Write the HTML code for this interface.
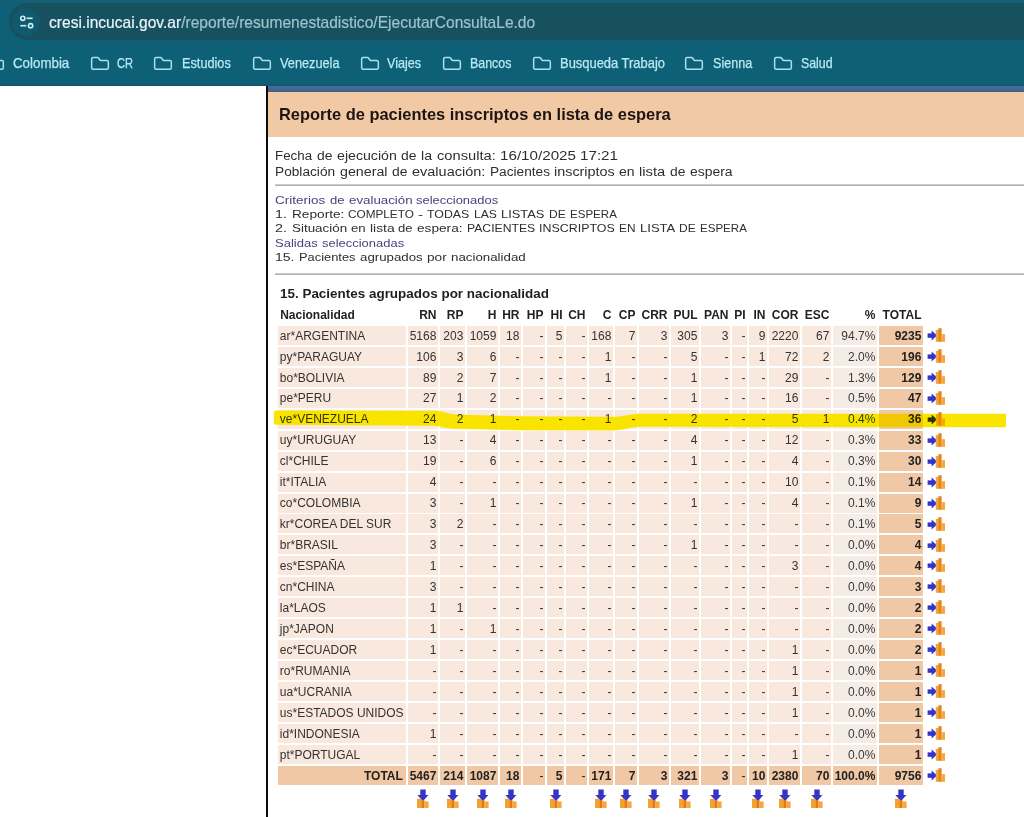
<!DOCTYPE html><html><head><meta charset="utf-8"><style>
html,body{margin:0;padding:0;}
body{width:1024px;height:817px;overflow:hidden;position:relative;background:#fff;font-family:"Liberation Sans", sans-serif;}
.a{position:absolute;white-space:pre;}
.t{position:absolute;white-space:pre;transform-origin:0 0;}
.c{position:absolute;}
.n{position:absolute;white-space:pre;text-align:right;font-size:12px;line-height:19px;height:19px;color:#333;}

</style></head><body>
<div class="c" style="left:0;top:0;width:1024px;height:86px;background:#0e6076"></div>
<div class="c" style="left:0;top:0;width:1024px;height:3px;background:#145f74"></div>
<div class="c" style="left:0;top:84px;width:1024px;height:2px;background:#195470"></div>
<div class="c" style="left:8.5px;top:3px;width:1100px;height:37px;border-radius:18.5px;background:#17515f"></div>
<div class="c" style="left:11.5px;top:7.5px;width:28px;height:28px;border-radius:14px;background:#0f5a6d"></div>
<svg class="c" style="left:11.5px;top:7.5px" width="28" height="28" viewBox="0 0 28 28">
<circle cx="10.8" cy="10.3" r="2.1" fill="none" stroke="#d2eef4" stroke-width="1.6"/>
<line x1="14.6" y1="10.3" x2="20.6" y2="10.3" stroke="#d2eef4" stroke-width="1.6"/>
<line x1="8.3" y1="17.7" x2="14.3" y2="17.7" stroke="#d2eef4" stroke-width="1.6"/>
<circle cx="18.6" cy="17.7" r="2.1" fill="none" stroke="#d2eef4" stroke-width="1.6"/>
</svg>
<svg class="c" style="left:-14.7px;top:56px" width="20" height="15" viewBox="0 0 20 15"><path d="M1.65 3 Q1.65 1.55 3.1 1.55 H7.6 Q8.1 1.55 8.5 2 L9.9 4 Q10.2 4.45 10.7 4.45 H16.9 Q18.35 4.45 18.35 5.9 V11.8 Q18.35 13.25 16.9 13.25 H3.1 Q1.65 13.25 1.65 11.8 Z" fill="none" stroke="#aadfeb" stroke-width="1.5" stroke-linejoin="round"/></svg>
<svg class="c" style="left:89.5px;top:56px" width="20" height="15" viewBox="0 0 20 15"><path d="M1.65 3 Q1.65 1.55 3.1 1.55 H7.6 Q8.1 1.55 8.5 2 L9.9 4 Q10.2 4.45 10.7 4.45 H16.9 Q18.35 4.45 18.35 5.9 V11.8 Q18.35 13.25 16.9 13.25 H3.1 Q1.65 13.25 1.65 11.8 Z" fill="none" stroke="#aadfeb" stroke-width="1.5" stroke-linejoin="round"/></svg>
<svg class="c" style="left:153.3px;top:56px" width="20" height="15" viewBox="0 0 20 15"><path d="M1.65 3 Q1.65 1.55 3.1 1.55 H7.6 Q8.1 1.55 8.5 2 L9.9 4 Q10.2 4.45 10.7 4.45 H16.9 Q18.35 4.45 18.35 5.9 V11.8 Q18.35 13.25 16.9 13.25 H3.1 Q1.65 13.25 1.65 11.8 Z" fill="none" stroke="#aadfeb" stroke-width="1.5" stroke-linejoin="round"/></svg>
<svg class="c" style="left:251.5px;top:56px" width="20" height="15" viewBox="0 0 20 15"><path d="M1.65 3 Q1.65 1.55 3.1 1.55 H7.6 Q8.1 1.55 8.5 2 L9.9 4 Q10.2 4.45 10.7 4.45 H16.9 Q18.35 4.45 18.35 5.9 V11.8 Q18.35 13.25 16.9 13.25 H3.1 Q1.65 13.25 1.65 11.8 Z" fill="none" stroke="#aadfeb" stroke-width="1.5" stroke-linejoin="round"/></svg>
<svg class="c" style="left:359.7px;top:56px" width="20" height="15" viewBox="0 0 20 15"><path d="M1.65 3 Q1.65 1.55 3.1 1.55 H7.6 Q8.1 1.55 8.5 2 L9.9 4 Q10.2 4.45 10.7 4.45 H16.9 Q18.35 4.45 18.35 5.9 V11.8 Q18.35 13.25 16.9 13.25 H3.1 Q1.65 13.25 1.65 11.8 Z" fill="none" stroke="#aadfeb" stroke-width="1.5" stroke-linejoin="round"/></svg>
<svg class="c" style="left:441.8px;top:56px" width="20" height="15" viewBox="0 0 20 15"><path d="M1.65 3 Q1.65 1.55 3.1 1.55 H7.6 Q8.1 1.55 8.5 2 L9.9 4 Q10.2 4.45 10.7 4.45 H16.9 Q18.35 4.45 18.35 5.9 V11.8 Q18.35 13.25 16.9 13.25 H3.1 Q1.65 13.25 1.65 11.8 Z" fill="none" stroke="#aadfeb" stroke-width="1.5" stroke-linejoin="round"/></svg>
<svg class="c" style="left:531.6px;top:56px" width="20" height="15" viewBox="0 0 20 15"><path d="M1.65 3 Q1.65 1.55 3.1 1.55 H7.6 Q8.1 1.55 8.5 2 L9.9 4 Q10.2 4.45 10.7 4.45 H16.9 Q18.35 4.45 18.35 5.9 V11.8 Q18.35 13.25 16.9 13.25 H3.1 Q1.65 13.25 1.65 11.8 Z" fill="none" stroke="#aadfeb" stroke-width="1.5" stroke-linejoin="round"/></svg>
<svg class="c" style="left:684.4px;top:56px" width="20" height="15" viewBox="0 0 20 15"><path d="M1.65 3 Q1.65 1.55 3.1 1.55 H7.6 Q8.1 1.55 8.5 2 L9.9 4 Q10.2 4.45 10.7 4.45 H16.9 Q18.35 4.45 18.35 5.9 V11.8 Q18.35 13.25 16.9 13.25 H3.1 Q1.65 13.25 1.65 11.8 Z" fill="none" stroke="#aadfeb" stroke-width="1.5" stroke-linejoin="round"/></svg>
<svg class="c" style="left:773.2px;top:56px" width="20" height="15" viewBox="0 0 20 15"><path d="M1.65 3 Q1.65 1.55 3.1 1.55 H7.6 Q8.1 1.55 8.5 2 L9.9 4 Q10.2 4.45 10.7 4.45 H16.9 Q18.35 4.45 18.35 5.9 V11.8 Q18.35 13.25 16.9 13.25 H3.1 Q1.65 13.25 1.65 11.8 Z" fill="none" stroke="#aadfeb" stroke-width="1.5" stroke-linejoin="round"/></svg>
<div class="c" style="left:266px;top:86px;width:2px;height:731px;background:#0b0b0b"></div>
<div class="c" style="left:268px;top:86px;width:756px;height:6px;background:linear-gradient(#3f6e9c,#3f6796 60%,#4b5d76)"></div>
<div class="c" style="left:268px;top:92px;width:756px;height:44.5px;background:#f1c9a5"></div>
<div class="c" style="left:275px;top:184px;width:749px;height:2px;background:linear-gradient(#cbcbcb 50%,#b2b2b2 50%)"></div>
<div class="c" style="left:275px;top:272.5px;width:749px;height:2px;background:linear-gradient(#cbcbcb 50%,#b2b2b2 50%)"></div>
<div class="t" style="left:49.00px;top:13.93px;font-size:16.5px;line-height:16.5px;font-weight:400;color:#e8f5f8;transform:scaleX(0.9438);-webkit-text-stroke:0.2px #e8f5f8;">cresi.incucai.gov.ar<span style="color:#9cc3cc;-webkit-text-stroke:0.2px #9cc3cc">/reporte/resumenestadistico/EjecutarConsultaLe.do</span></div>
<div class="t" style="left:12.60px;top:56.20px;font-size:14.3px;line-height:14.3px;font-weight:400;color:#b6eaf3;transform:scaleX(0.9320);-webkit-text-stroke:0.25px #b6eaf3;">Colombia</div>
<div class="t" style="left:117.30px;top:56.20px;font-size:14.3px;line-height:14.3px;font-weight:400;color:#b6eaf3;transform:scaleX(0.7746);-webkit-text-stroke:0.25px #b6eaf3;">CR</div>
<div class="t" style="left:181.80px;top:56.20px;font-size:14.3px;line-height:14.3px;font-weight:400;color:#b6eaf3;transform:scaleX(0.8898);-webkit-text-stroke:0.25px #b6eaf3;">Estudios</div>
<div class="t" style="left:279.50px;top:56.20px;font-size:14.3px;line-height:14.3px;font-weight:400;color:#b6eaf3;transform:scaleX(0.8910);-webkit-text-stroke:0.25px #b6eaf3;">Venezuela</div>
<div class="t" style="left:387.40px;top:56.20px;font-size:14.3px;line-height:14.3px;font-weight:400;color:#b6eaf3;transform:scaleX(0.8840);-webkit-text-stroke:0.25px #b6eaf3;">Viajes</div>
<div class="t" style="left:470.00px;top:56.20px;font-size:14.3px;line-height:14.3px;font-weight:400;color:#b6eaf3;transform:scaleX(0.8682);-webkit-text-stroke:0.25px #b6eaf3;">Bancos</div>
<div class="t" style="left:559.90px;top:56.20px;font-size:14.3px;line-height:14.3px;font-weight:400;color:#b6eaf3;transform:scaleX(0.9047);-webkit-text-stroke:0.25px #b6eaf3;">Busqueda Trabajo</div>
<div class="t" style="left:712.80px;top:56.20px;font-size:14.3px;line-height:14.3px;font-weight:400;color:#b6eaf3;transform:scaleX(0.8803);-webkit-text-stroke:0.25px #b6eaf3;">Sienna</div>
<div class="t" style="left:801.10px;top:56.20px;font-size:14.3px;line-height:14.3px;font-weight:400;color:#b6eaf3;transform:scaleX(0.8639);-webkit-text-stroke:0.25px #b6eaf3;">Salud</div>
<div class="t" style="left:279.20px;top:105.90px;font-size:16.3px;line-height:16.3px;font-weight:700;color:#1d1511;transform:scaleX(1.0092);">Reporte de pacientes inscriptos en lista de espera</div>
<div class="t" style="left:275.40px;top:150.02px;font-size:12.5px;line-height:12.5px;font-weight:400;color:#2e2e2e;transform:scaleX(1.0670);">Fecha</div>
<div class="t" style="left:316.94px;top:150.02px;font-size:12.5px;line-height:12.5px;font-weight:400;color:#2e2e2e;transform:scaleX(1.1108);">de</div>
<div class="t" style="left:336.85px;top:150.02px;font-size:12.5px;line-height:12.5px;font-weight:400;color:#2e2e2e;transform:scaleX(1.1334);">ejecución</div>
<div class="t" style="left:401.18px;top:150.02px;font-size:12.5px;line-height:12.5px;font-weight:400;color:#2e2e2e;transform:scaleX(1.1108);">de</div>
<div class="t" style="left:421.09px;top:150.02px;font-size:12.5px;line-height:12.5px;font-weight:400;color:#2e2e2e;transform:scaleX(1.1391);">la</div>
<div class="t" style="left:436.64px;top:150.02px;font-size:12.5px;line-height:12.5px;font-weight:400;color:#2e2e2e;transform:scaleX(1.1747);">consulta:</div>
<div class="t" style="left:499.87px;top:150.02px;font-size:12.5px;line-height:12.5px;font-weight:400;color:#2e2e2e;transform:scaleX(1.2145);">16/10/2025</div>
<div class="t" style="left:580.31px;top:150.02px;font-size:12.5px;line-height:12.5px;font-weight:400;color:#2e2e2e;transform:scaleX(1.2145);">17:21</div>
<div class="t" style="left:275.40px;top:165.82px;font-size:12.5px;line-height:12.5px;font-weight:400;color:#2e2e2e;transform:scaleX(1.0947);">Población</div>
<div class="t" style="left:339.96px;top:165.82px;font-size:12.5px;line-height:12.5px;font-weight:400;color:#2e2e2e;transform:scaleX(1.1395);">general</div>
<div class="t" style="left:391.94px;top:165.82px;font-size:12.5px;line-height:12.5px;font-weight:400;color:#2e2e2e;transform:scaleX(1.1108);">de</div>
<div class="t" style="left:411.85px;top:165.82px;font-size:12.5px;line-height:12.5px;font-weight:400;color:#2e2e2e;transform:scaleX(1.1592);">evaluación:</div>
<div class="t" style="left:489.63px;top:165.82px;font-size:12.5px;line-height:12.5px;font-weight:400;color:#2e2e2e;transform:scaleX(1.0937);">Pacientes</div>
<div class="t" style="left:554.15px;top:165.82px;font-size:12.5px;line-height:12.5px;font-weight:400;color:#2e2e2e;transform:scaleX(1.1509);">inscriptos</div>
<div class="t" style="left:619.37px;top:165.82px;font-size:12.5px;line-height:12.5px;font-weight:400;color:#2e2e2e;transform:scaleX(1.1199);">en</div>
<div class="t" style="left:639.40px;top:165.82px;font-size:12.5px;line-height:12.5px;font-weight:400;color:#2e2e2e;transform:scaleX(1.1763);">lista</div>
<div class="t" style="left:670.02px;top:165.82px;font-size:12.5px;line-height:12.5px;font-weight:400;color:#2e2e2e;transform:scaleX(1.1108);">de</div>
<div class="t" style="left:689.93px;top:165.82px;font-size:12.5px;line-height:12.5px;font-weight:400;color:#2e2e2e;transform:scaleX(1.1149);">espera</div>
<div class="t" style="left:275.40px;top:194.57px;font-size:11.5px;line-height:11.5px;font-weight:400;color:#48427f;transform:scaleX(1.1748);">Criterios</div>
<div class="t" style="left:329.89px;top:194.57px;font-size:11.5px;line-height:11.5px;font-weight:400;color:#48427f;transform:scaleX(1.1359);">de</div>
<div class="t" style="left:348.63px;top:194.57px;font-size:11.5px;line-height:11.5px;font-weight:400;color:#48427f;transform:scaleX(1.1563);">evaluación</div>
<div class="t" style="left:416.40px;top:194.57px;font-size:11.5px;line-height:11.5px;font-weight:400;color:#48427f;transform:scaleX(1.1279);">seleccionados</div>
<div class="t" style="left:275.40px;top:209.17px;font-size:11.5px;line-height:11.5px;font-weight:400;color:#2e2e2e;transform:scaleX(1.2429);">1.</div>
<div class="t" style="left:291.52px;top:209.17px;font-size:11.5px;line-height:11.5px;font-weight:400;color:#2e2e2e;transform:scaleX(1.1873);">Reporte:</div>
<div class="t" style="left:348.09px;top:209.17px;font-size:11.5px;line-height:11.5px;font-weight:400;color:#2e2e2e;transform:scaleX(1.0238);">COMPLETO</div>
<div class="t" style="left:418.14px;top:209.17px;font-size:11.5px;line-height:11.5px;font-weight:400;color:#2e2e2e;transform:scaleX(1.3370);">-</div>
<div class="t" style="left:427.48px;top:209.17px;font-size:11.5px;line-height:11.5px;font-weight:400;color:#2e2e2e;transform:scaleX(1.0714);">TODAS</div>
<div class="t" style="left:473.91px;top:209.17px;font-size:11.5px;line-height:11.5px;font-weight:400;color:#2e2e2e;transform:scaleX(1.0553);">LAS</div>
<div class="t" style="left:501.06px;top:209.17px;font-size:11.5px;line-height:11.5px;font-weight:400;color:#2e2e2e;transform:scaleX(1.1210);">LISTAS</div>
<div class="t" style="left:548.73px;top:209.17px;font-size:11.5px;line-height:11.5px;font-weight:400;color:#2e2e2e;transform:scaleX(1.0466);">DE</div>
<div class="t" style="left:569.66px;top:209.17px;font-size:11.5px;line-height:11.5px;font-weight:400;color:#2e2e2e;transform:scaleX(1.0041);">ESPERA</div>
<div class="t" style="left:275.40px;top:223.37px;font-size:11.5px;line-height:11.5px;font-weight:400;color:#2e2e2e;transform:scaleX(1.2429);">2.</div>
<div class="t" style="left:291.52px;top:223.37px;font-size:11.5px;line-height:11.5px;font-weight:400;color:#2e2e2e;transform:scaleX(1.1646);">Situación</div>
<div class="t" style="left:350.82px;top:223.37px;font-size:11.5px;line-height:11.5px;font-weight:400;color:#2e2e2e;transform:scaleX(1.1452);">en</div>
<div class="t" style="left:369.67px;top:223.37px;font-size:11.5px;line-height:11.5px;font-weight:400;color:#2e2e2e;transform:scaleX(1.2033);">lista</div>
<div class="t" style="left:398.48px;top:223.37px;font-size:11.5px;line-height:11.5px;font-weight:400;color:#2e2e2e;transform:scaleX(1.1359);">de</div>
<div class="t" style="left:417.21px;top:223.37px;font-size:11.5px;line-height:11.5px;font-weight:400;color:#2e2e2e;transform:scaleX(1.1868);">espera:</div>
<div class="t" style="left:466.94px;top:223.37px;font-size:11.5px;line-height:11.5px;font-weight:400;color:#2e2e2e;transform:scaleX(1.0599);">PACIENTES</div>
<div class="t" style="left:539.31px;top:223.37px;font-size:11.5px;line-height:11.5px;font-weight:400;color:#2e2e2e;transform:scaleX(1.0817);">INSCRIPTOS</div>
<div class="t" style="left:619.31px;top:223.37px;font-size:11.5px;line-height:11.5px;font-weight:400;color:#2e2e2e;transform:scaleX(1.0295);">EN</div>
<div class="t" style="left:639.96px;top:223.37px;font-size:11.5px;line-height:11.5px;font-weight:400;color:#2e2e2e;transform:scaleX(1.1353);">LISTA</div>
<div class="t" style="left:679.48px;top:223.37px;font-size:11.5px;line-height:11.5px;font-weight:400;color:#2e2e2e;transform:scaleX(1.0466);">DE</div>
<div class="t" style="left:700.41px;top:223.37px;font-size:11.5px;line-height:11.5px;font-weight:400;color:#2e2e2e;transform:scaleX(1.0041);">ESPERA</div>
<div class="t" style="left:275.40px;top:237.97px;font-size:11.5px;line-height:11.5px;font-weight:400;color:#48427f;transform:scaleX(1.1311);">Salidas</div>
<div class="t" style="left:322.26px;top:237.97px;font-size:11.5px;line-height:11.5px;font-weight:400;color:#48427f;transform:scaleX(1.1270);">seleccionadas</div>
<div class="t" style="left:275.40px;top:252.37px;font-size:11.5px;line-height:11.5px;font-weight:400;color:#2e2e2e;transform:scaleX(1.2192);">15.</div>
<div class="t" style="left:299.10px;top:252.37px;font-size:11.5px;line-height:11.5px;font-weight:400;color:#2e2e2e;transform:scaleX(1.1186);">Pacientes</div>
<div class="t" style="left:359.81px;top:252.37px;font-size:11.5px;line-height:11.5px;font-weight:400;color:#2e2e2e;transform:scaleX(1.1536);">agrupados</div>
<div class="t" style="left:426.72px;top:252.37px;font-size:11.5px;line-height:11.5px;font-weight:400;color:#2e2e2e;transform:scaleX(1.1885);">por</div>
<div class="t" style="left:450.67px;top:252.37px;font-size:11.5px;line-height:11.5px;font-weight:400;color:#2e2e2e;transform:scaleX(1.1565);">nacionalidad</div>
<div class="t" style="left:280.20px;top:287.46px;font-size:13.4px;line-height:13.4px;font-weight:700;color:#1f1f1f;transform:scaleX(1.0041);">15. Pacientes agrupados por nacionalidad</div>
<div class="a" style="left:280.2px;top:309.44px;font-size:12px;line-height:12px;font-weight:700;color:#222">Nacionalidad</div>
<div class="n" style="left:408.0px;width:28.5px;top:305.94px;font-weight:700;color:#222">RN</div>
<div class="n" style="left:440.0px;width:23.5px;top:305.94px;font-weight:700;color:#222">RP</div>
<div class="n" style="left:467.0px;width:29.5px;top:305.94px;font-weight:700;color:#222">H</div>
<div class="n" style="left:500.0px;width:19.5px;top:305.94px;font-weight:700;color:#222">HR</div>
<div class="n" style="left:523.0px;width:20.5px;top:305.94px;font-weight:700;color:#222">HP</div>
<div class="n" style="left:547.0px;width:15.5px;top:305.94px;font-weight:700;color:#222">HI</div>
<div class="n" style="left:566.0px;width:19.5px;top:305.94px;font-weight:700;color:#222">CH</div>
<div class="n" style="left:589.0px;width:22.5px;top:305.94px;font-weight:700;color:#222">C</div>
<div class="n" style="left:615.0px;width:20.5px;top:305.94px;font-weight:700;color:#222">CP</div>
<div class="n" style="left:639.0px;width:28.5px;top:305.94px;font-weight:700;color:#222">CRR</div>
<div class="n" style="left:671.0px;width:26.5px;top:305.94px;font-weight:700;color:#222">PUL</div>
<div class="n" style="left:701.0px;width:27.5px;top:305.94px;font-weight:700;color:#222">PAN</div>
<div class="n" style="left:732.0px;width:13.5px;top:305.94px;font-weight:700;color:#222">PI</div>
<div class="n" style="left:749.0px;width:16.5px;top:305.94px;font-weight:700;color:#222">IN</div>
<div class="n" style="left:769.0px;width:29.5px;top:305.94px;font-weight:700;color:#222">COR</div>
<div class="n" style="left:802.0px;width:27.5px;top:305.94px;font-weight:700;color:#222">ESC</div>
<div class="n" style="left:833.0px;width:42.5px;top:305.94px;font-weight:700;color:#222">%</div>
<div class="n" style="left:879.0px;width:42.5px;top:305.94px;font-weight:700;color:#222">TOTAL</div>
<div class="c" style="left:278.0px;top:325.90px;width:128.0px;height:19px;background:#f9e8de"></div>
<div class="c" style="left:408.0px;top:325.90px;width:30.0px;height:19px;background:#f9e8de"></div>
<div class="c" style="left:440.0px;top:325.90px;width:25.0px;height:19px;background:#f9e8de"></div>
<div class="c" style="left:467.0px;top:325.90px;width:31.0px;height:19px;background:#f9e8de"></div>
<div class="c" style="left:500.0px;top:325.90px;width:21.0px;height:19px;background:#f9e8de"></div>
<div class="c" style="left:523.0px;top:325.90px;width:22.0px;height:19px;background:#f9e8de"></div>
<div class="c" style="left:547.0px;top:325.90px;width:17.0px;height:19px;background:#f9e8de"></div>
<div class="c" style="left:566.0px;top:325.90px;width:21.0px;height:19px;background:#f9e8de"></div>
<div class="c" style="left:589.0px;top:325.90px;width:24.0px;height:19px;background:#f9e8de"></div>
<div class="c" style="left:615.0px;top:325.90px;width:22.0px;height:19px;background:#f9e8de"></div>
<div class="c" style="left:639.0px;top:325.90px;width:30.0px;height:19px;background:#f9e8de"></div>
<div class="c" style="left:671.0px;top:325.90px;width:28.0px;height:19px;background:#f9e8de"></div>
<div class="c" style="left:701.0px;top:325.90px;width:29.0px;height:19px;background:#f9e8de"></div>
<div class="c" style="left:732.0px;top:325.90px;width:15.0px;height:19px;background:#f9e8de"></div>
<div class="c" style="left:749.0px;top:325.90px;width:18.0px;height:19px;background:#f9e8de"></div>
<div class="c" style="left:769.0px;top:325.90px;width:31.0px;height:19px;background:#f9e8de"></div>
<div class="c" style="left:802.0px;top:325.90px;width:29.0px;height:19px;background:#f9e8de"></div>
<div class="c" style="left:833.0px;top:325.90px;width:44.0px;height:19px;background:#f6ece6"></div>
<div class="c" style="left:879.0px;top:325.90px;width:44.0px;height:19px;background:#f0c8a5"></div>
<div class="a" style="left:279.8px;top:326.60px;font-size:12px;line-height:19px;color:#333">ar*ARGENTINA</div>
<div class="n" style="left:408.0px;width:28.4px;top:326.60px;font-weight:400;color:#333">5168</div>
<div class="n" style="left:440.0px;width:23.4px;top:326.60px;font-weight:400;color:#333">203</div>
<div class="n" style="left:467.0px;width:29.4px;top:326.60px;font-weight:400;color:#333">1059</div>
<div class="n" style="left:500.0px;width:19.4px;top:326.60px;font-weight:400;color:#333">18</div>
<div class="n" style="left:523.0px;width:20.4px;top:326.60px;font-weight:400;color:#333">-</div>
<div class="n" style="left:547.0px;width:15.4px;top:326.60px;font-weight:400;color:#333">5</div>
<div class="n" style="left:566.0px;width:19.4px;top:326.60px;font-weight:400;color:#333">-</div>
<div class="n" style="left:589.0px;width:22.4px;top:326.60px;font-weight:400;color:#333">168</div>
<div class="n" style="left:615.0px;width:20.4px;top:326.60px;font-weight:400;color:#333">7</div>
<div class="n" style="left:639.0px;width:28.4px;top:326.60px;font-weight:400;color:#333">3</div>
<div class="n" style="left:671.0px;width:26.4px;top:326.60px;font-weight:400;color:#333">305</div>
<div class="n" style="left:701.0px;width:27.4px;top:326.60px;font-weight:400;color:#333">3</div>
<div class="n" style="left:732.0px;width:13.4px;top:326.60px;font-weight:400;color:#333">-</div>
<div class="n" style="left:749.0px;width:16.4px;top:326.60px;font-weight:400;color:#333">9</div>
<div class="n" style="left:769.0px;width:29.4px;top:326.60px;font-weight:400;color:#333">2220</div>
<div class="n" style="left:802.0px;width:27.4px;top:326.60px;font-weight:400;color:#333">67</div>
<div class="n" style="left:833.0px;width:42.4px;top:326.60px;font-weight:400;color:#3a3a3a">94.7%</div>
<div class="n" style="left:879.0px;width:42.4px;top:326.60px;font-weight:700;color:#222">9235</div>
<svg class="c" style="left:927px;top:328.00px" width="19" height="15" viewBox="0 0 19 15">
<rect x="0.6" y="5.4" width="5" height="4.4" fill="#3434c6"/><path d="M4.6 2.6 L10.2 7.6 L4.6 12.5 Z" fill="#3434c6"/>
<rect x="8.8" y="1.9" width="3" height="11.9" fill="#f2a640"/><rect x="11.4" y="0.2" width="3.2" height="13.6" fill="#e5841c"/><rect x="14.4" y="6.2" width="3.6" height="7.6" fill="#f6a83a"/>
</svg>
<div class="c" style="left:278.0px;top:346.85px;width:128.0px;height:19px;background:#f9e8de"></div>
<div class="c" style="left:408.0px;top:346.85px;width:30.0px;height:19px;background:#f9e8de"></div>
<div class="c" style="left:440.0px;top:346.85px;width:25.0px;height:19px;background:#f9e8de"></div>
<div class="c" style="left:467.0px;top:346.85px;width:31.0px;height:19px;background:#f9e8de"></div>
<div class="c" style="left:500.0px;top:346.85px;width:21.0px;height:19px;background:#f9e8de"></div>
<div class="c" style="left:523.0px;top:346.85px;width:22.0px;height:19px;background:#f9e8de"></div>
<div class="c" style="left:547.0px;top:346.85px;width:17.0px;height:19px;background:#f9e8de"></div>
<div class="c" style="left:566.0px;top:346.85px;width:21.0px;height:19px;background:#f9e8de"></div>
<div class="c" style="left:589.0px;top:346.85px;width:24.0px;height:19px;background:#f9e8de"></div>
<div class="c" style="left:615.0px;top:346.85px;width:22.0px;height:19px;background:#f9e8de"></div>
<div class="c" style="left:639.0px;top:346.85px;width:30.0px;height:19px;background:#f9e8de"></div>
<div class="c" style="left:671.0px;top:346.85px;width:28.0px;height:19px;background:#f9e8de"></div>
<div class="c" style="left:701.0px;top:346.85px;width:29.0px;height:19px;background:#f9e8de"></div>
<div class="c" style="left:732.0px;top:346.85px;width:15.0px;height:19px;background:#f9e8de"></div>
<div class="c" style="left:749.0px;top:346.85px;width:18.0px;height:19px;background:#f9e8de"></div>
<div class="c" style="left:769.0px;top:346.85px;width:31.0px;height:19px;background:#f9e8de"></div>
<div class="c" style="left:802.0px;top:346.85px;width:29.0px;height:19px;background:#f9e8de"></div>
<div class="c" style="left:833.0px;top:346.85px;width:44.0px;height:19px;background:#f6ece6"></div>
<div class="c" style="left:879.0px;top:346.85px;width:44.0px;height:19px;background:#f0c8a5"></div>
<div class="a" style="left:279.8px;top:347.55px;font-size:12px;line-height:19px;color:#333">py*PARAGUAY</div>
<div class="n" style="left:408.0px;width:28.4px;top:347.55px;font-weight:400;color:#333">106</div>
<div class="n" style="left:440.0px;width:23.4px;top:347.55px;font-weight:400;color:#333">3</div>
<div class="n" style="left:467.0px;width:29.4px;top:347.55px;font-weight:400;color:#333">6</div>
<div class="n" style="left:500.0px;width:19.4px;top:347.55px;font-weight:400;color:#333">-</div>
<div class="n" style="left:523.0px;width:20.4px;top:347.55px;font-weight:400;color:#333">-</div>
<div class="n" style="left:547.0px;width:15.4px;top:347.55px;font-weight:400;color:#333">-</div>
<div class="n" style="left:566.0px;width:19.4px;top:347.55px;font-weight:400;color:#333">-</div>
<div class="n" style="left:589.0px;width:22.4px;top:347.55px;font-weight:400;color:#333">1</div>
<div class="n" style="left:615.0px;width:20.4px;top:347.55px;font-weight:400;color:#333">-</div>
<div class="n" style="left:639.0px;width:28.4px;top:347.55px;font-weight:400;color:#333">-</div>
<div class="n" style="left:671.0px;width:26.4px;top:347.55px;font-weight:400;color:#333">5</div>
<div class="n" style="left:701.0px;width:27.4px;top:347.55px;font-weight:400;color:#333">-</div>
<div class="n" style="left:732.0px;width:13.4px;top:347.55px;font-weight:400;color:#333">-</div>
<div class="n" style="left:749.0px;width:16.4px;top:347.55px;font-weight:400;color:#333">1</div>
<div class="n" style="left:769.0px;width:29.4px;top:347.55px;font-weight:400;color:#333">72</div>
<div class="n" style="left:802.0px;width:27.4px;top:347.55px;font-weight:400;color:#333">2</div>
<div class="n" style="left:833.0px;width:42.4px;top:347.55px;font-weight:400;color:#3a3a3a">2.0%</div>
<div class="n" style="left:879.0px;width:42.4px;top:347.55px;font-weight:700;color:#222">196</div>
<svg class="c" style="left:927px;top:348.95px" width="19" height="15" viewBox="0 0 19 15">
<rect x="0.6" y="5.4" width="5" height="4.4" fill="#3434c6"/><path d="M4.6 2.6 L10.2 7.6 L4.6 12.5 Z" fill="#3434c6"/>
<rect x="8.8" y="1.9" width="3" height="11.9" fill="#f2a640"/><rect x="11.4" y="0.2" width="3.2" height="13.6" fill="#e5841c"/><rect x="14.4" y="6.2" width="3.6" height="7.6" fill="#f6a83a"/>
</svg>
<div class="c" style="left:278.0px;top:367.80px;width:128.0px;height:19px;background:#f9e8de"></div>
<div class="c" style="left:408.0px;top:367.80px;width:30.0px;height:19px;background:#f9e8de"></div>
<div class="c" style="left:440.0px;top:367.80px;width:25.0px;height:19px;background:#f9e8de"></div>
<div class="c" style="left:467.0px;top:367.80px;width:31.0px;height:19px;background:#f9e8de"></div>
<div class="c" style="left:500.0px;top:367.80px;width:21.0px;height:19px;background:#f9e8de"></div>
<div class="c" style="left:523.0px;top:367.80px;width:22.0px;height:19px;background:#f9e8de"></div>
<div class="c" style="left:547.0px;top:367.80px;width:17.0px;height:19px;background:#f9e8de"></div>
<div class="c" style="left:566.0px;top:367.80px;width:21.0px;height:19px;background:#f9e8de"></div>
<div class="c" style="left:589.0px;top:367.80px;width:24.0px;height:19px;background:#f9e8de"></div>
<div class="c" style="left:615.0px;top:367.80px;width:22.0px;height:19px;background:#f9e8de"></div>
<div class="c" style="left:639.0px;top:367.80px;width:30.0px;height:19px;background:#f9e8de"></div>
<div class="c" style="left:671.0px;top:367.80px;width:28.0px;height:19px;background:#f9e8de"></div>
<div class="c" style="left:701.0px;top:367.80px;width:29.0px;height:19px;background:#f9e8de"></div>
<div class="c" style="left:732.0px;top:367.80px;width:15.0px;height:19px;background:#f9e8de"></div>
<div class="c" style="left:749.0px;top:367.80px;width:18.0px;height:19px;background:#f9e8de"></div>
<div class="c" style="left:769.0px;top:367.80px;width:31.0px;height:19px;background:#f9e8de"></div>
<div class="c" style="left:802.0px;top:367.80px;width:29.0px;height:19px;background:#f9e8de"></div>
<div class="c" style="left:833.0px;top:367.80px;width:44.0px;height:19px;background:#f6ece6"></div>
<div class="c" style="left:879.0px;top:367.80px;width:44.0px;height:19px;background:#f0c8a5"></div>
<div class="a" style="left:279.8px;top:368.50px;font-size:12px;line-height:19px;color:#333">bo*BOLIVIA</div>
<div class="n" style="left:408.0px;width:28.4px;top:368.50px;font-weight:400;color:#333">89</div>
<div class="n" style="left:440.0px;width:23.4px;top:368.50px;font-weight:400;color:#333">2</div>
<div class="n" style="left:467.0px;width:29.4px;top:368.50px;font-weight:400;color:#333">7</div>
<div class="n" style="left:500.0px;width:19.4px;top:368.50px;font-weight:400;color:#333">-</div>
<div class="n" style="left:523.0px;width:20.4px;top:368.50px;font-weight:400;color:#333">-</div>
<div class="n" style="left:547.0px;width:15.4px;top:368.50px;font-weight:400;color:#333">-</div>
<div class="n" style="left:566.0px;width:19.4px;top:368.50px;font-weight:400;color:#333">-</div>
<div class="n" style="left:589.0px;width:22.4px;top:368.50px;font-weight:400;color:#333">1</div>
<div class="n" style="left:615.0px;width:20.4px;top:368.50px;font-weight:400;color:#333">-</div>
<div class="n" style="left:639.0px;width:28.4px;top:368.50px;font-weight:400;color:#333">-</div>
<div class="n" style="left:671.0px;width:26.4px;top:368.50px;font-weight:400;color:#333">1</div>
<div class="n" style="left:701.0px;width:27.4px;top:368.50px;font-weight:400;color:#333">-</div>
<div class="n" style="left:732.0px;width:13.4px;top:368.50px;font-weight:400;color:#333">-</div>
<div class="n" style="left:749.0px;width:16.4px;top:368.50px;font-weight:400;color:#333">-</div>
<div class="n" style="left:769.0px;width:29.4px;top:368.50px;font-weight:400;color:#333">29</div>
<div class="n" style="left:802.0px;width:27.4px;top:368.50px;font-weight:400;color:#333">-</div>
<div class="n" style="left:833.0px;width:42.4px;top:368.50px;font-weight:400;color:#3a3a3a">1.3%</div>
<div class="n" style="left:879.0px;width:42.4px;top:368.50px;font-weight:700;color:#222">129</div>
<svg class="c" style="left:927px;top:369.90px" width="19" height="15" viewBox="0 0 19 15">
<rect x="0.6" y="5.4" width="5" height="4.4" fill="#3434c6"/><path d="M4.6 2.6 L10.2 7.6 L4.6 12.5 Z" fill="#3434c6"/>
<rect x="8.8" y="1.9" width="3" height="11.9" fill="#f2a640"/><rect x="11.4" y="0.2" width="3.2" height="13.6" fill="#e5841c"/><rect x="14.4" y="6.2" width="3.6" height="7.6" fill="#f6a83a"/>
</svg>
<div class="c" style="left:278.0px;top:388.75px;width:128.0px;height:19px;background:#f9e8de"></div>
<div class="c" style="left:408.0px;top:388.75px;width:30.0px;height:19px;background:#f9e8de"></div>
<div class="c" style="left:440.0px;top:388.75px;width:25.0px;height:19px;background:#f9e8de"></div>
<div class="c" style="left:467.0px;top:388.75px;width:31.0px;height:19px;background:#f9e8de"></div>
<div class="c" style="left:500.0px;top:388.75px;width:21.0px;height:19px;background:#f9e8de"></div>
<div class="c" style="left:523.0px;top:388.75px;width:22.0px;height:19px;background:#f9e8de"></div>
<div class="c" style="left:547.0px;top:388.75px;width:17.0px;height:19px;background:#f9e8de"></div>
<div class="c" style="left:566.0px;top:388.75px;width:21.0px;height:19px;background:#f9e8de"></div>
<div class="c" style="left:589.0px;top:388.75px;width:24.0px;height:19px;background:#f9e8de"></div>
<div class="c" style="left:615.0px;top:388.75px;width:22.0px;height:19px;background:#f9e8de"></div>
<div class="c" style="left:639.0px;top:388.75px;width:30.0px;height:19px;background:#f9e8de"></div>
<div class="c" style="left:671.0px;top:388.75px;width:28.0px;height:19px;background:#f9e8de"></div>
<div class="c" style="left:701.0px;top:388.75px;width:29.0px;height:19px;background:#f9e8de"></div>
<div class="c" style="left:732.0px;top:388.75px;width:15.0px;height:19px;background:#f9e8de"></div>
<div class="c" style="left:749.0px;top:388.75px;width:18.0px;height:19px;background:#f9e8de"></div>
<div class="c" style="left:769.0px;top:388.75px;width:31.0px;height:19px;background:#f9e8de"></div>
<div class="c" style="left:802.0px;top:388.75px;width:29.0px;height:19px;background:#f9e8de"></div>
<div class="c" style="left:833.0px;top:388.75px;width:44.0px;height:19px;background:#f6ece6"></div>
<div class="c" style="left:879.0px;top:388.75px;width:44.0px;height:19px;background:#f0c8a5"></div>
<div class="a" style="left:279.8px;top:389.45px;font-size:12px;line-height:19px;color:#333">pe*PERU</div>
<div class="n" style="left:408.0px;width:28.4px;top:389.45px;font-weight:400;color:#333">27</div>
<div class="n" style="left:440.0px;width:23.4px;top:389.45px;font-weight:400;color:#333">1</div>
<div class="n" style="left:467.0px;width:29.4px;top:389.45px;font-weight:400;color:#333">2</div>
<div class="n" style="left:500.0px;width:19.4px;top:389.45px;font-weight:400;color:#333">-</div>
<div class="n" style="left:523.0px;width:20.4px;top:389.45px;font-weight:400;color:#333">-</div>
<div class="n" style="left:547.0px;width:15.4px;top:389.45px;font-weight:400;color:#333">-</div>
<div class="n" style="left:566.0px;width:19.4px;top:389.45px;font-weight:400;color:#333">-</div>
<div class="n" style="left:589.0px;width:22.4px;top:389.45px;font-weight:400;color:#333">-</div>
<div class="n" style="left:615.0px;width:20.4px;top:389.45px;font-weight:400;color:#333">-</div>
<div class="n" style="left:639.0px;width:28.4px;top:389.45px;font-weight:400;color:#333">-</div>
<div class="n" style="left:671.0px;width:26.4px;top:389.45px;font-weight:400;color:#333">1</div>
<div class="n" style="left:701.0px;width:27.4px;top:389.45px;font-weight:400;color:#333">-</div>
<div class="n" style="left:732.0px;width:13.4px;top:389.45px;font-weight:400;color:#333">-</div>
<div class="n" style="left:749.0px;width:16.4px;top:389.45px;font-weight:400;color:#333">-</div>
<div class="n" style="left:769.0px;width:29.4px;top:389.45px;font-weight:400;color:#333">16</div>
<div class="n" style="left:802.0px;width:27.4px;top:389.45px;font-weight:400;color:#333">-</div>
<div class="n" style="left:833.0px;width:42.4px;top:389.45px;font-weight:400;color:#3a3a3a">0.5%</div>
<div class="n" style="left:879.0px;width:42.4px;top:389.45px;font-weight:700;color:#222">47</div>
<svg class="c" style="left:927px;top:390.85px" width="19" height="15" viewBox="0 0 19 15">
<rect x="0.6" y="5.4" width="5" height="4.4" fill="#3434c6"/><path d="M4.6 2.6 L10.2 7.6 L4.6 12.5 Z" fill="#3434c6"/>
<rect x="8.8" y="1.9" width="3" height="11.9" fill="#f2a640"/><rect x="11.4" y="0.2" width="3.2" height="13.6" fill="#e5841c"/><rect x="14.4" y="6.2" width="3.6" height="7.6" fill="#f6a83a"/>
</svg>
<div class="c" style="left:278.0px;top:409.70px;width:128.0px;height:19px;background:#f9e8de"></div>
<div class="c" style="left:408.0px;top:409.70px;width:30.0px;height:19px;background:#f9e8de"></div>
<div class="c" style="left:440.0px;top:409.70px;width:25.0px;height:19px;background:#f9e8de"></div>
<div class="c" style="left:467.0px;top:409.70px;width:31.0px;height:19px;background:#f9e8de"></div>
<div class="c" style="left:500.0px;top:409.70px;width:21.0px;height:19px;background:#f9e8de"></div>
<div class="c" style="left:523.0px;top:409.70px;width:22.0px;height:19px;background:#f9e8de"></div>
<div class="c" style="left:547.0px;top:409.70px;width:17.0px;height:19px;background:#f9e8de"></div>
<div class="c" style="left:566.0px;top:409.70px;width:21.0px;height:19px;background:#f9e8de"></div>
<div class="c" style="left:589.0px;top:409.70px;width:24.0px;height:19px;background:#f9e8de"></div>
<div class="c" style="left:615.0px;top:409.70px;width:22.0px;height:19px;background:#f9e8de"></div>
<div class="c" style="left:639.0px;top:409.70px;width:30.0px;height:19px;background:#f9e8de"></div>
<div class="c" style="left:671.0px;top:409.70px;width:28.0px;height:19px;background:#f9e8de"></div>
<div class="c" style="left:701.0px;top:409.70px;width:29.0px;height:19px;background:#f9e8de"></div>
<div class="c" style="left:732.0px;top:409.70px;width:15.0px;height:19px;background:#f9e8de"></div>
<div class="c" style="left:749.0px;top:409.70px;width:18.0px;height:19px;background:#f9e8de"></div>
<div class="c" style="left:769.0px;top:409.70px;width:31.0px;height:19px;background:#f9e8de"></div>
<div class="c" style="left:802.0px;top:409.70px;width:29.0px;height:19px;background:#f9e8de"></div>
<div class="c" style="left:833.0px;top:409.70px;width:44.0px;height:19px;background:#f6ece6"></div>
<div class="c" style="left:879.0px;top:409.70px;width:44.0px;height:19px;background:#f0c8a5"></div>
<div class="a" style="left:279.8px;top:410.40px;font-size:12px;line-height:19px;color:#333">ve*VENEZUELA</div>
<div class="n" style="left:408.0px;width:28.4px;top:410.40px;font-weight:400;color:#333">24</div>
<div class="n" style="left:440.0px;width:23.4px;top:410.40px;font-weight:400;color:#333">2</div>
<div class="n" style="left:467.0px;width:29.4px;top:410.40px;font-weight:400;color:#333">1</div>
<div class="n" style="left:500.0px;width:19.4px;top:410.40px;font-weight:400;color:#333">-</div>
<div class="n" style="left:523.0px;width:20.4px;top:410.40px;font-weight:400;color:#333">-</div>
<div class="n" style="left:547.0px;width:15.4px;top:410.40px;font-weight:400;color:#333">-</div>
<div class="n" style="left:566.0px;width:19.4px;top:410.40px;font-weight:400;color:#333">-</div>
<div class="n" style="left:589.0px;width:22.4px;top:410.40px;font-weight:400;color:#333">1</div>
<div class="n" style="left:615.0px;width:20.4px;top:410.40px;font-weight:400;color:#333">-</div>
<div class="n" style="left:639.0px;width:28.4px;top:410.40px;font-weight:400;color:#333">-</div>
<div class="n" style="left:671.0px;width:26.4px;top:410.40px;font-weight:400;color:#333">2</div>
<div class="n" style="left:701.0px;width:27.4px;top:410.40px;font-weight:400;color:#333">-</div>
<div class="n" style="left:732.0px;width:13.4px;top:410.40px;font-weight:400;color:#333">-</div>
<div class="n" style="left:749.0px;width:16.4px;top:410.40px;font-weight:400;color:#333">-</div>
<div class="n" style="left:769.0px;width:29.4px;top:410.40px;font-weight:400;color:#333">5</div>
<div class="n" style="left:802.0px;width:27.4px;top:410.40px;font-weight:400;color:#333">1</div>
<div class="n" style="left:833.0px;width:42.4px;top:410.40px;font-weight:400;color:#3a3a3a">0.4%</div>
<div class="n" style="left:879.0px;width:42.4px;top:410.40px;font-weight:700;color:#222">36</div>
<svg class="c" style="left:927px;top:411.80px" width="19" height="15" viewBox="0 0 19 15">
<rect x="0.6" y="5.4" width="5" height="4.4" fill="#3434c6"/><path d="M4.6 2.6 L10.2 7.6 L4.6 12.5 Z" fill="#3434c6"/>
<rect x="8.8" y="1.9" width="3" height="11.9" fill="#f2a640"/><rect x="11.4" y="0.2" width="3.2" height="13.6" fill="#e5841c"/><rect x="14.4" y="6.2" width="3.6" height="7.6" fill="#f6a83a"/>
</svg>
<div class="c" style="left:278.0px;top:430.65px;width:128.0px;height:19px;background:#f9e8de"></div>
<div class="c" style="left:408.0px;top:430.65px;width:30.0px;height:19px;background:#f9e8de"></div>
<div class="c" style="left:440.0px;top:430.65px;width:25.0px;height:19px;background:#f9e8de"></div>
<div class="c" style="left:467.0px;top:430.65px;width:31.0px;height:19px;background:#f9e8de"></div>
<div class="c" style="left:500.0px;top:430.65px;width:21.0px;height:19px;background:#f9e8de"></div>
<div class="c" style="left:523.0px;top:430.65px;width:22.0px;height:19px;background:#f9e8de"></div>
<div class="c" style="left:547.0px;top:430.65px;width:17.0px;height:19px;background:#f9e8de"></div>
<div class="c" style="left:566.0px;top:430.65px;width:21.0px;height:19px;background:#f9e8de"></div>
<div class="c" style="left:589.0px;top:430.65px;width:24.0px;height:19px;background:#f9e8de"></div>
<div class="c" style="left:615.0px;top:430.65px;width:22.0px;height:19px;background:#f9e8de"></div>
<div class="c" style="left:639.0px;top:430.65px;width:30.0px;height:19px;background:#f9e8de"></div>
<div class="c" style="left:671.0px;top:430.65px;width:28.0px;height:19px;background:#f9e8de"></div>
<div class="c" style="left:701.0px;top:430.65px;width:29.0px;height:19px;background:#f9e8de"></div>
<div class="c" style="left:732.0px;top:430.65px;width:15.0px;height:19px;background:#f9e8de"></div>
<div class="c" style="left:749.0px;top:430.65px;width:18.0px;height:19px;background:#f9e8de"></div>
<div class="c" style="left:769.0px;top:430.65px;width:31.0px;height:19px;background:#f9e8de"></div>
<div class="c" style="left:802.0px;top:430.65px;width:29.0px;height:19px;background:#f9e8de"></div>
<div class="c" style="left:833.0px;top:430.65px;width:44.0px;height:19px;background:#f6ece6"></div>
<div class="c" style="left:879.0px;top:430.65px;width:44.0px;height:19px;background:#f0c8a5"></div>
<div class="a" style="left:279.8px;top:431.35px;font-size:12px;line-height:19px;color:#333">uy*URUGUAY</div>
<div class="n" style="left:408.0px;width:28.4px;top:431.35px;font-weight:400;color:#333">13</div>
<div class="n" style="left:440.0px;width:23.4px;top:431.35px;font-weight:400;color:#333">-</div>
<div class="n" style="left:467.0px;width:29.4px;top:431.35px;font-weight:400;color:#333">4</div>
<div class="n" style="left:500.0px;width:19.4px;top:431.35px;font-weight:400;color:#333">-</div>
<div class="n" style="left:523.0px;width:20.4px;top:431.35px;font-weight:400;color:#333">-</div>
<div class="n" style="left:547.0px;width:15.4px;top:431.35px;font-weight:400;color:#333">-</div>
<div class="n" style="left:566.0px;width:19.4px;top:431.35px;font-weight:400;color:#333">-</div>
<div class="n" style="left:589.0px;width:22.4px;top:431.35px;font-weight:400;color:#333">-</div>
<div class="n" style="left:615.0px;width:20.4px;top:431.35px;font-weight:400;color:#333">-</div>
<div class="n" style="left:639.0px;width:28.4px;top:431.35px;font-weight:400;color:#333">-</div>
<div class="n" style="left:671.0px;width:26.4px;top:431.35px;font-weight:400;color:#333">4</div>
<div class="n" style="left:701.0px;width:27.4px;top:431.35px;font-weight:400;color:#333">-</div>
<div class="n" style="left:732.0px;width:13.4px;top:431.35px;font-weight:400;color:#333">-</div>
<div class="n" style="left:749.0px;width:16.4px;top:431.35px;font-weight:400;color:#333">-</div>
<div class="n" style="left:769.0px;width:29.4px;top:431.35px;font-weight:400;color:#333">12</div>
<div class="n" style="left:802.0px;width:27.4px;top:431.35px;font-weight:400;color:#333">-</div>
<div class="n" style="left:833.0px;width:42.4px;top:431.35px;font-weight:400;color:#3a3a3a">0.3%</div>
<div class="n" style="left:879.0px;width:42.4px;top:431.35px;font-weight:700;color:#222">33</div>
<svg class="c" style="left:927px;top:432.75px" width="19" height="15" viewBox="0 0 19 15">
<rect x="0.6" y="5.4" width="5" height="4.4" fill="#3434c6"/><path d="M4.6 2.6 L10.2 7.6 L4.6 12.5 Z" fill="#3434c6"/>
<rect x="8.8" y="1.9" width="3" height="11.9" fill="#f2a640"/><rect x="11.4" y="0.2" width="3.2" height="13.6" fill="#e5841c"/><rect x="14.4" y="6.2" width="3.6" height="7.6" fill="#f6a83a"/>
</svg>
<div class="c" style="left:278.0px;top:451.60px;width:128.0px;height:19px;background:#f9e8de"></div>
<div class="c" style="left:408.0px;top:451.60px;width:30.0px;height:19px;background:#f9e8de"></div>
<div class="c" style="left:440.0px;top:451.60px;width:25.0px;height:19px;background:#f9e8de"></div>
<div class="c" style="left:467.0px;top:451.60px;width:31.0px;height:19px;background:#f9e8de"></div>
<div class="c" style="left:500.0px;top:451.60px;width:21.0px;height:19px;background:#f9e8de"></div>
<div class="c" style="left:523.0px;top:451.60px;width:22.0px;height:19px;background:#f9e8de"></div>
<div class="c" style="left:547.0px;top:451.60px;width:17.0px;height:19px;background:#f9e8de"></div>
<div class="c" style="left:566.0px;top:451.60px;width:21.0px;height:19px;background:#f9e8de"></div>
<div class="c" style="left:589.0px;top:451.60px;width:24.0px;height:19px;background:#f9e8de"></div>
<div class="c" style="left:615.0px;top:451.60px;width:22.0px;height:19px;background:#f9e8de"></div>
<div class="c" style="left:639.0px;top:451.60px;width:30.0px;height:19px;background:#f9e8de"></div>
<div class="c" style="left:671.0px;top:451.60px;width:28.0px;height:19px;background:#f9e8de"></div>
<div class="c" style="left:701.0px;top:451.60px;width:29.0px;height:19px;background:#f9e8de"></div>
<div class="c" style="left:732.0px;top:451.60px;width:15.0px;height:19px;background:#f9e8de"></div>
<div class="c" style="left:749.0px;top:451.60px;width:18.0px;height:19px;background:#f9e8de"></div>
<div class="c" style="left:769.0px;top:451.60px;width:31.0px;height:19px;background:#f9e8de"></div>
<div class="c" style="left:802.0px;top:451.60px;width:29.0px;height:19px;background:#f9e8de"></div>
<div class="c" style="left:833.0px;top:451.60px;width:44.0px;height:19px;background:#f6ece6"></div>
<div class="c" style="left:879.0px;top:451.60px;width:44.0px;height:19px;background:#f0c8a5"></div>
<div class="a" style="left:279.8px;top:452.30px;font-size:12px;line-height:19px;color:#333">cl*CHILE</div>
<div class="n" style="left:408.0px;width:28.4px;top:452.30px;font-weight:400;color:#333">19</div>
<div class="n" style="left:440.0px;width:23.4px;top:452.30px;font-weight:400;color:#333">-</div>
<div class="n" style="left:467.0px;width:29.4px;top:452.30px;font-weight:400;color:#333">6</div>
<div class="n" style="left:500.0px;width:19.4px;top:452.30px;font-weight:400;color:#333">-</div>
<div class="n" style="left:523.0px;width:20.4px;top:452.30px;font-weight:400;color:#333">-</div>
<div class="n" style="left:547.0px;width:15.4px;top:452.30px;font-weight:400;color:#333">-</div>
<div class="n" style="left:566.0px;width:19.4px;top:452.30px;font-weight:400;color:#333">-</div>
<div class="n" style="left:589.0px;width:22.4px;top:452.30px;font-weight:400;color:#333">-</div>
<div class="n" style="left:615.0px;width:20.4px;top:452.30px;font-weight:400;color:#333">-</div>
<div class="n" style="left:639.0px;width:28.4px;top:452.30px;font-weight:400;color:#333">-</div>
<div class="n" style="left:671.0px;width:26.4px;top:452.30px;font-weight:400;color:#333">1</div>
<div class="n" style="left:701.0px;width:27.4px;top:452.30px;font-weight:400;color:#333">-</div>
<div class="n" style="left:732.0px;width:13.4px;top:452.30px;font-weight:400;color:#333">-</div>
<div class="n" style="left:749.0px;width:16.4px;top:452.30px;font-weight:400;color:#333">-</div>
<div class="n" style="left:769.0px;width:29.4px;top:452.30px;font-weight:400;color:#333">4</div>
<div class="n" style="left:802.0px;width:27.4px;top:452.30px;font-weight:400;color:#333">-</div>
<div class="n" style="left:833.0px;width:42.4px;top:452.30px;font-weight:400;color:#3a3a3a">0.3%</div>
<div class="n" style="left:879.0px;width:42.4px;top:452.30px;font-weight:700;color:#222">30</div>
<svg class="c" style="left:927px;top:453.70px" width="19" height="15" viewBox="0 0 19 15">
<rect x="0.6" y="5.4" width="5" height="4.4" fill="#3434c6"/><path d="M4.6 2.6 L10.2 7.6 L4.6 12.5 Z" fill="#3434c6"/>
<rect x="8.8" y="1.9" width="3" height="11.9" fill="#f2a640"/><rect x="11.4" y="0.2" width="3.2" height="13.6" fill="#e5841c"/><rect x="14.4" y="6.2" width="3.6" height="7.6" fill="#f6a83a"/>
</svg>
<div class="c" style="left:278.0px;top:472.55px;width:128.0px;height:19px;background:#f9e8de"></div>
<div class="c" style="left:408.0px;top:472.55px;width:30.0px;height:19px;background:#f9e8de"></div>
<div class="c" style="left:440.0px;top:472.55px;width:25.0px;height:19px;background:#f9e8de"></div>
<div class="c" style="left:467.0px;top:472.55px;width:31.0px;height:19px;background:#f9e8de"></div>
<div class="c" style="left:500.0px;top:472.55px;width:21.0px;height:19px;background:#f9e8de"></div>
<div class="c" style="left:523.0px;top:472.55px;width:22.0px;height:19px;background:#f9e8de"></div>
<div class="c" style="left:547.0px;top:472.55px;width:17.0px;height:19px;background:#f9e8de"></div>
<div class="c" style="left:566.0px;top:472.55px;width:21.0px;height:19px;background:#f9e8de"></div>
<div class="c" style="left:589.0px;top:472.55px;width:24.0px;height:19px;background:#f9e8de"></div>
<div class="c" style="left:615.0px;top:472.55px;width:22.0px;height:19px;background:#f9e8de"></div>
<div class="c" style="left:639.0px;top:472.55px;width:30.0px;height:19px;background:#f9e8de"></div>
<div class="c" style="left:671.0px;top:472.55px;width:28.0px;height:19px;background:#f9e8de"></div>
<div class="c" style="left:701.0px;top:472.55px;width:29.0px;height:19px;background:#f9e8de"></div>
<div class="c" style="left:732.0px;top:472.55px;width:15.0px;height:19px;background:#f9e8de"></div>
<div class="c" style="left:749.0px;top:472.55px;width:18.0px;height:19px;background:#f9e8de"></div>
<div class="c" style="left:769.0px;top:472.55px;width:31.0px;height:19px;background:#f9e8de"></div>
<div class="c" style="left:802.0px;top:472.55px;width:29.0px;height:19px;background:#f9e8de"></div>
<div class="c" style="left:833.0px;top:472.55px;width:44.0px;height:19px;background:#f6ece6"></div>
<div class="c" style="left:879.0px;top:472.55px;width:44.0px;height:19px;background:#f0c8a5"></div>
<div class="a" style="left:279.8px;top:473.25px;font-size:12px;line-height:19px;color:#333">it*ITALIA</div>
<div class="n" style="left:408.0px;width:28.4px;top:473.25px;font-weight:400;color:#333">4</div>
<div class="n" style="left:440.0px;width:23.4px;top:473.25px;font-weight:400;color:#333">-</div>
<div class="n" style="left:467.0px;width:29.4px;top:473.25px;font-weight:400;color:#333">-</div>
<div class="n" style="left:500.0px;width:19.4px;top:473.25px;font-weight:400;color:#333">-</div>
<div class="n" style="left:523.0px;width:20.4px;top:473.25px;font-weight:400;color:#333">-</div>
<div class="n" style="left:547.0px;width:15.4px;top:473.25px;font-weight:400;color:#333">-</div>
<div class="n" style="left:566.0px;width:19.4px;top:473.25px;font-weight:400;color:#333">-</div>
<div class="n" style="left:589.0px;width:22.4px;top:473.25px;font-weight:400;color:#333">-</div>
<div class="n" style="left:615.0px;width:20.4px;top:473.25px;font-weight:400;color:#333">-</div>
<div class="n" style="left:639.0px;width:28.4px;top:473.25px;font-weight:400;color:#333">-</div>
<div class="n" style="left:671.0px;width:26.4px;top:473.25px;font-weight:400;color:#333">-</div>
<div class="n" style="left:701.0px;width:27.4px;top:473.25px;font-weight:400;color:#333">-</div>
<div class="n" style="left:732.0px;width:13.4px;top:473.25px;font-weight:400;color:#333">-</div>
<div class="n" style="left:749.0px;width:16.4px;top:473.25px;font-weight:400;color:#333">-</div>
<div class="n" style="left:769.0px;width:29.4px;top:473.25px;font-weight:400;color:#333">10</div>
<div class="n" style="left:802.0px;width:27.4px;top:473.25px;font-weight:400;color:#333">-</div>
<div class="n" style="left:833.0px;width:42.4px;top:473.25px;font-weight:400;color:#3a3a3a">0.1%</div>
<div class="n" style="left:879.0px;width:42.4px;top:473.25px;font-weight:700;color:#222">14</div>
<svg class="c" style="left:927px;top:474.65px" width="19" height="15" viewBox="0 0 19 15">
<rect x="0.6" y="5.4" width="5" height="4.4" fill="#3434c6"/><path d="M4.6 2.6 L10.2 7.6 L4.6 12.5 Z" fill="#3434c6"/>
<rect x="8.8" y="1.9" width="3" height="11.9" fill="#f2a640"/><rect x="11.4" y="0.2" width="3.2" height="13.6" fill="#e5841c"/><rect x="14.4" y="6.2" width="3.6" height="7.6" fill="#f6a83a"/>
</svg>
<div class="c" style="left:278.0px;top:493.50px;width:128.0px;height:19px;background:#f9e8de"></div>
<div class="c" style="left:408.0px;top:493.50px;width:30.0px;height:19px;background:#f9e8de"></div>
<div class="c" style="left:440.0px;top:493.50px;width:25.0px;height:19px;background:#f9e8de"></div>
<div class="c" style="left:467.0px;top:493.50px;width:31.0px;height:19px;background:#f9e8de"></div>
<div class="c" style="left:500.0px;top:493.50px;width:21.0px;height:19px;background:#f9e8de"></div>
<div class="c" style="left:523.0px;top:493.50px;width:22.0px;height:19px;background:#f9e8de"></div>
<div class="c" style="left:547.0px;top:493.50px;width:17.0px;height:19px;background:#f9e8de"></div>
<div class="c" style="left:566.0px;top:493.50px;width:21.0px;height:19px;background:#f9e8de"></div>
<div class="c" style="left:589.0px;top:493.50px;width:24.0px;height:19px;background:#f9e8de"></div>
<div class="c" style="left:615.0px;top:493.50px;width:22.0px;height:19px;background:#f9e8de"></div>
<div class="c" style="left:639.0px;top:493.50px;width:30.0px;height:19px;background:#f9e8de"></div>
<div class="c" style="left:671.0px;top:493.50px;width:28.0px;height:19px;background:#f9e8de"></div>
<div class="c" style="left:701.0px;top:493.50px;width:29.0px;height:19px;background:#f9e8de"></div>
<div class="c" style="left:732.0px;top:493.50px;width:15.0px;height:19px;background:#f9e8de"></div>
<div class="c" style="left:749.0px;top:493.50px;width:18.0px;height:19px;background:#f9e8de"></div>
<div class="c" style="left:769.0px;top:493.50px;width:31.0px;height:19px;background:#f9e8de"></div>
<div class="c" style="left:802.0px;top:493.50px;width:29.0px;height:19px;background:#f9e8de"></div>
<div class="c" style="left:833.0px;top:493.50px;width:44.0px;height:19px;background:#f6ece6"></div>
<div class="c" style="left:879.0px;top:493.50px;width:44.0px;height:19px;background:#f0c8a5"></div>
<div class="a" style="left:279.8px;top:494.20px;font-size:12px;line-height:19px;color:#333">co*COLOMBIA</div>
<div class="n" style="left:408.0px;width:28.4px;top:494.20px;font-weight:400;color:#333">3</div>
<div class="n" style="left:440.0px;width:23.4px;top:494.20px;font-weight:400;color:#333">-</div>
<div class="n" style="left:467.0px;width:29.4px;top:494.20px;font-weight:400;color:#333">1</div>
<div class="n" style="left:500.0px;width:19.4px;top:494.20px;font-weight:400;color:#333">-</div>
<div class="n" style="left:523.0px;width:20.4px;top:494.20px;font-weight:400;color:#333">-</div>
<div class="n" style="left:547.0px;width:15.4px;top:494.20px;font-weight:400;color:#333">-</div>
<div class="n" style="left:566.0px;width:19.4px;top:494.20px;font-weight:400;color:#333">-</div>
<div class="n" style="left:589.0px;width:22.4px;top:494.20px;font-weight:400;color:#333">-</div>
<div class="n" style="left:615.0px;width:20.4px;top:494.20px;font-weight:400;color:#333">-</div>
<div class="n" style="left:639.0px;width:28.4px;top:494.20px;font-weight:400;color:#333">-</div>
<div class="n" style="left:671.0px;width:26.4px;top:494.20px;font-weight:400;color:#333">1</div>
<div class="n" style="left:701.0px;width:27.4px;top:494.20px;font-weight:400;color:#333">-</div>
<div class="n" style="left:732.0px;width:13.4px;top:494.20px;font-weight:400;color:#333">-</div>
<div class="n" style="left:749.0px;width:16.4px;top:494.20px;font-weight:400;color:#333">-</div>
<div class="n" style="left:769.0px;width:29.4px;top:494.20px;font-weight:400;color:#333">4</div>
<div class="n" style="left:802.0px;width:27.4px;top:494.20px;font-weight:400;color:#333">-</div>
<div class="n" style="left:833.0px;width:42.4px;top:494.20px;font-weight:400;color:#3a3a3a">0.1%</div>
<div class="n" style="left:879.0px;width:42.4px;top:494.20px;font-weight:700;color:#222">9</div>
<svg class="c" style="left:927px;top:495.60px" width="19" height="15" viewBox="0 0 19 15">
<rect x="0.6" y="5.4" width="5" height="4.4" fill="#3434c6"/><path d="M4.6 2.6 L10.2 7.6 L4.6 12.5 Z" fill="#3434c6"/>
<rect x="8.8" y="1.9" width="3" height="11.9" fill="#f2a640"/><rect x="11.4" y="0.2" width="3.2" height="13.6" fill="#e5841c"/><rect x="14.4" y="6.2" width="3.6" height="7.6" fill="#f6a83a"/>
</svg>
<div class="c" style="left:278.0px;top:514.45px;width:128.0px;height:19px;background:#f9e8de"></div>
<div class="c" style="left:408.0px;top:514.45px;width:30.0px;height:19px;background:#f9e8de"></div>
<div class="c" style="left:440.0px;top:514.45px;width:25.0px;height:19px;background:#f9e8de"></div>
<div class="c" style="left:467.0px;top:514.45px;width:31.0px;height:19px;background:#f9e8de"></div>
<div class="c" style="left:500.0px;top:514.45px;width:21.0px;height:19px;background:#f9e8de"></div>
<div class="c" style="left:523.0px;top:514.45px;width:22.0px;height:19px;background:#f9e8de"></div>
<div class="c" style="left:547.0px;top:514.45px;width:17.0px;height:19px;background:#f9e8de"></div>
<div class="c" style="left:566.0px;top:514.45px;width:21.0px;height:19px;background:#f9e8de"></div>
<div class="c" style="left:589.0px;top:514.45px;width:24.0px;height:19px;background:#f9e8de"></div>
<div class="c" style="left:615.0px;top:514.45px;width:22.0px;height:19px;background:#f9e8de"></div>
<div class="c" style="left:639.0px;top:514.45px;width:30.0px;height:19px;background:#f9e8de"></div>
<div class="c" style="left:671.0px;top:514.45px;width:28.0px;height:19px;background:#f9e8de"></div>
<div class="c" style="left:701.0px;top:514.45px;width:29.0px;height:19px;background:#f9e8de"></div>
<div class="c" style="left:732.0px;top:514.45px;width:15.0px;height:19px;background:#f9e8de"></div>
<div class="c" style="left:749.0px;top:514.45px;width:18.0px;height:19px;background:#f9e8de"></div>
<div class="c" style="left:769.0px;top:514.45px;width:31.0px;height:19px;background:#f9e8de"></div>
<div class="c" style="left:802.0px;top:514.45px;width:29.0px;height:19px;background:#f9e8de"></div>
<div class="c" style="left:833.0px;top:514.45px;width:44.0px;height:19px;background:#f6ece6"></div>
<div class="c" style="left:879.0px;top:514.45px;width:44.0px;height:19px;background:#f0c8a5"></div>
<div class="a" style="left:279.8px;top:515.15px;font-size:12px;line-height:19px;color:#333">kr*COREA DEL SUR</div>
<div class="n" style="left:408.0px;width:28.4px;top:515.15px;font-weight:400;color:#333">3</div>
<div class="n" style="left:440.0px;width:23.4px;top:515.15px;font-weight:400;color:#333">2</div>
<div class="n" style="left:467.0px;width:29.4px;top:515.15px;font-weight:400;color:#333">-</div>
<div class="n" style="left:500.0px;width:19.4px;top:515.15px;font-weight:400;color:#333">-</div>
<div class="n" style="left:523.0px;width:20.4px;top:515.15px;font-weight:400;color:#333">-</div>
<div class="n" style="left:547.0px;width:15.4px;top:515.15px;font-weight:400;color:#333">-</div>
<div class="n" style="left:566.0px;width:19.4px;top:515.15px;font-weight:400;color:#333">-</div>
<div class="n" style="left:589.0px;width:22.4px;top:515.15px;font-weight:400;color:#333">-</div>
<div class="n" style="left:615.0px;width:20.4px;top:515.15px;font-weight:400;color:#333">-</div>
<div class="n" style="left:639.0px;width:28.4px;top:515.15px;font-weight:400;color:#333">-</div>
<div class="n" style="left:671.0px;width:26.4px;top:515.15px;font-weight:400;color:#333">-</div>
<div class="n" style="left:701.0px;width:27.4px;top:515.15px;font-weight:400;color:#333">-</div>
<div class="n" style="left:732.0px;width:13.4px;top:515.15px;font-weight:400;color:#333">-</div>
<div class="n" style="left:749.0px;width:16.4px;top:515.15px;font-weight:400;color:#333">-</div>
<div class="n" style="left:769.0px;width:29.4px;top:515.15px;font-weight:400;color:#333">-</div>
<div class="n" style="left:802.0px;width:27.4px;top:515.15px;font-weight:400;color:#333">-</div>
<div class="n" style="left:833.0px;width:42.4px;top:515.15px;font-weight:400;color:#3a3a3a">0.1%</div>
<div class="n" style="left:879.0px;width:42.4px;top:515.15px;font-weight:700;color:#222">5</div>
<svg class="c" style="left:927px;top:516.55px" width="19" height="15" viewBox="0 0 19 15">
<rect x="0.6" y="5.4" width="5" height="4.4" fill="#3434c6"/><path d="M4.6 2.6 L10.2 7.6 L4.6 12.5 Z" fill="#3434c6"/>
<rect x="8.8" y="1.9" width="3" height="11.9" fill="#f2a640"/><rect x="11.4" y="0.2" width="3.2" height="13.6" fill="#e5841c"/><rect x="14.4" y="6.2" width="3.6" height="7.6" fill="#f6a83a"/>
</svg>
<div class="c" style="left:278.0px;top:535.40px;width:128.0px;height:19px;background:#f9e8de"></div>
<div class="c" style="left:408.0px;top:535.40px;width:30.0px;height:19px;background:#f9e8de"></div>
<div class="c" style="left:440.0px;top:535.40px;width:25.0px;height:19px;background:#f9e8de"></div>
<div class="c" style="left:467.0px;top:535.40px;width:31.0px;height:19px;background:#f9e8de"></div>
<div class="c" style="left:500.0px;top:535.40px;width:21.0px;height:19px;background:#f9e8de"></div>
<div class="c" style="left:523.0px;top:535.40px;width:22.0px;height:19px;background:#f9e8de"></div>
<div class="c" style="left:547.0px;top:535.40px;width:17.0px;height:19px;background:#f9e8de"></div>
<div class="c" style="left:566.0px;top:535.40px;width:21.0px;height:19px;background:#f9e8de"></div>
<div class="c" style="left:589.0px;top:535.40px;width:24.0px;height:19px;background:#f9e8de"></div>
<div class="c" style="left:615.0px;top:535.40px;width:22.0px;height:19px;background:#f9e8de"></div>
<div class="c" style="left:639.0px;top:535.40px;width:30.0px;height:19px;background:#f9e8de"></div>
<div class="c" style="left:671.0px;top:535.40px;width:28.0px;height:19px;background:#f9e8de"></div>
<div class="c" style="left:701.0px;top:535.40px;width:29.0px;height:19px;background:#f9e8de"></div>
<div class="c" style="left:732.0px;top:535.40px;width:15.0px;height:19px;background:#f9e8de"></div>
<div class="c" style="left:749.0px;top:535.40px;width:18.0px;height:19px;background:#f9e8de"></div>
<div class="c" style="left:769.0px;top:535.40px;width:31.0px;height:19px;background:#f9e8de"></div>
<div class="c" style="left:802.0px;top:535.40px;width:29.0px;height:19px;background:#f9e8de"></div>
<div class="c" style="left:833.0px;top:535.40px;width:44.0px;height:19px;background:#f6ece6"></div>
<div class="c" style="left:879.0px;top:535.40px;width:44.0px;height:19px;background:#f0c8a5"></div>
<div class="a" style="left:279.8px;top:536.10px;font-size:12px;line-height:19px;color:#333">br*BRASIL</div>
<div class="n" style="left:408.0px;width:28.4px;top:536.10px;font-weight:400;color:#333">3</div>
<div class="n" style="left:440.0px;width:23.4px;top:536.10px;font-weight:400;color:#333">-</div>
<div class="n" style="left:467.0px;width:29.4px;top:536.10px;font-weight:400;color:#333">-</div>
<div class="n" style="left:500.0px;width:19.4px;top:536.10px;font-weight:400;color:#333">-</div>
<div class="n" style="left:523.0px;width:20.4px;top:536.10px;font-weight:400;color:#333">-</div>
<div class="n" style="left:547.0px;width:15.4px;top:536.10px;font-weight:400;color:#333">-</div>
<div class="n" style="left:566.0px;width:19.4px;top:536.10px;font-weight:400;color:#333">-</div>
<div class="n" style="left:589.0px;width:22.4px;top:536.10px;font-weight:400;color:#333">-</div>
<div class="n" style="left:615.0px;width:20.4px;top:536.10px;font-weight:400;color:#333">-</div>
<div class="n" style="left:639.0px;width:28.4px;top:536.10px;font-weight:400;color:#333">-</div>
<div class="n" style="left:671.0px;width:26.4px;top:536.10px;font-weight:400;color:#333">1</div>
<div class="n" style="left:701.0px;width:27.4px;top:536.10px;font-weight:400;color:#333">-</div>
<div class="n" style="left:732.0px;width:13.4px;top:536.10px;font-weight:400;color:#333">-</div>
<div class="n" style="left:749.0px;width:16.4px;top:536.10px;font-weight:400;color:#333">-</div>
<div class="n" style="left:769.0px;width:29.4px;top:536.10px;font-weight:400;color:#333">-</div>
<div class="n" style="left:802.0px;width:27.4px;top:536.10px;font-weight:400;color:#333">-</div>
<div class="n" style="left:833.0px;width:42.4px;top:536.10px;font-weight:400;color:#3a3a3a">0.0%</div>
<div class="n" style="left:879.0px;width:42.4px;top:536.10px;font-weight:700;color:#222">4</div>
<svg class="c" style="left:927px;top:537.50px" width="19" height="15" viewBox="0 0 19 15">
<rect x="0.6" y="5.4" width="5" height="4.4" fill="#3434c6"/><path d="M4.6 2.6 L10.2 7.6 L4.6 12.5 Z" fill="#3434c6"/>
<rect x="8.8" y="1.9" width="3" height="11.9" fill="#f2a640"/><rect x="11.4" y="0.2" width="3.2" height="13.6" fill="#e5841c"/><rect x="14.4" y="6.2" width="3.6" height="7.6" fill="#f6a83a"/>
</svg>
<div class="c" style="left:278.0px;top:556.35px;width:128.0px;height:19px;background:#f9e8de"></div>
<div class="c" style="left:408.0px;top:556.35px;width:30.0px;height:19px;background:#f9e8de"></div>
<div class="c" style="left:440.0px;top:556.35px;width:25.0px;height:19px;background:#f9e8de"></div>
<div class="c" style="left:467.0px;top:556.35px;width:31.0px;height:19px;background:#f9e8de"></div>
<div class="c" style="left:500.0px;top:556.35px;width:21.0px;height:19px;background:#f9e8de"></div>
<div class="c" style="left:523.0px;top:556.35px;width:22.0px;height:19px;background:#f9e8de"></div>
<div class="c" style="left:547.0px;top:556.35px;width:17.0px;height:19px;background:#f9e8de"></div>
<div class="c" style="left:566.0px;top:556.35px;width:21.0px;height:19px;background:#f9e8de"></div>
<div class="c" style="left:589.0px;top:556.35px;width:24.0px;height:19px;background:#f9e8de"></div>
<div class="c" style="left:615.0px;top:556.35px;width:22.0px;height:19px;background:#f9e8de"></div>
<div class="c" style="left:639.0px;top:556.35px;width:30.0px;height:19px;background:#f9e8de"></div>
<div class="c" style="left:671.0px;top:556.35px;width:28.0px;height:19px;background:#f9e8de"></div>
<div class="c" style="left:701.0px;top:556.35px;width:29.0px;height:19px;background:#f9e8de"></div>
<div class="c" style="left:732.0px;top:556.35px;width:15.0px;height:19px;background:#f9e8de"></div>
<div class="c" style="left:749.0px;top:556.35px;width:18.0px;height:19px;background:#f9e8de"></div>
<div class="c" style="left:769.0px;top:556.35px;width:31.0px;height:19px;background:#f9e8de"></div>
<div class="c" style="left:802.0px;top:556.35px;width:29.0px;height:19px;background:#f9e8de"></div>
<div class="c" style="left:833.0px;top:556.35px;width:44.0px;height:19px;background:#f6ece6"></div>
<div class="c" style="left:879.0px;top:556.35px;width:44.0px;height:19px;background:#f0c8a5"></div>
<div class="a" style="left:279.8px;top:557.05px;font-size:12px;line-height:19px;color:#333">es*ESPAÑA</div>
<div class="n" style="left:408.0px;width:28.4px;top:557.05px;font-weight:400;color:#333">1</div>
<div class="n" style="left:440.0px;width:23.4px;top:557.05px;font-weight:400;color:#333">-</div>
<div class="n" style="left:467.0px;width:29.4px;top:557.05px;font-weight:400;color:#333">-</div>
<div class="n" style="left:500.0px;width:19.4px;top:557.05px;font-weight:400;color:#333">-</div>
<div class="n" style="left:523.0px;width:20.4px;top:557.05px;font-weight:400;color:#333">-</div>
<div class="n" style="left:547.0px;width:15.4px;top:557.05px;font-weight:400;color:#333">-</div>
<div class="n" style="left:566.0px;width:19.4px;top:557.05px;font-weight:400;color:#333">-</div>
<div class="n" style="left:589.0px;width:22.4px;top:557.05px;font-weight:400;color:#333">-</div>
<div class="n" style="left:615.0px;width:20.4px;top:557.05px;font-weight:400;color:#333">-</div>
<div class="n" style="left:639.0px;width:28.4px;top:557.05px;font-weight:400;color:#333">-</div>
<div class="n" style="left:671.0px;width:26.4px;top:557.05px;font-weight:400;color:#333">-</div>
<div class="n" style="left:701.0px;width:27.4px;top:557.05px;font-weight:400;color:#333">-</div>
<div class="n" style="left:732.0px;width:13.4px;top:557.05px;font-weight:400;color:#333">-</div>
<div class="n" style="left:749.0px;width:16.4px;top:557.05px;font-weight:400;color:#333">-</div>
<div class="n" style="left:769.0px;width:29.4px;top:557.05px;font-weight:400;color:#333">3</div>
<div class="n" style="left:802.0px;width:27.4px;top:557.05px;font-weight:400;color:#333">-</div>
<div class="n" style="left:833.0px;width:42.4px;top:557.05px;font-weight:400;color:#3a3a3a">0.0%</div>
<div class="n" style="left:879.0px;width:42.4px;top:557.05px;font-weight:700;color:#222">4</div>
<svg class="c" style="left:927px;top:558.45px" width="19" height="15" viewBox="0 0 19 15">
<rect x="0.6" y="5.4" width="5" height="4.4" fill="#3434c6"/><path d="M4.6 2.6 L10.2 7.6 L4.6 12.5 Z" fill="#3434c6"/>
<rect x="8.8" y="1.9" width="3" height="11.9" fill="#f2a640"/><rect x="11.4" y="0.2" width="3.2" height="13.6" fill="#e5841c"/><rect x="14.4" y="6.2" width="3.6" height="7.6" fill="#f6a83a"/>
</svg>
<div class="c" style="left:278.0px;top:577.30px;width:128.0px;height:19px;background:#f9e8de"></div>
<div class="c" style="left:408.0px;top:577.30px;width:30.0px;height:19px;background:#f9e8de"></div>
<div class="c" style="left:440.0px;top:577.30px;width:25.0px;height:19px;background:#f9e8de"></div>
<div class="c" style="left:467.0px;top:577.30px;width:31.0px;height:19px;background:#f9e8de"></div>
<div class="c" style="left:500.0px;top:577.30px;width:21.0px;height:19px;background:#f9e8de"></div>
<div class="c" style="left:523.0px;top:577.30px;width:22.0px;height:19px;background:#f9e8de"></div>
<div class="c" style="left:547.0px;top:577.30px;width:17.0px;height:19px;background:#f9e8de"></div>
<div class="c" style="left:566.0px;top:577.30px;width:21.0px;height:19px;background:#f9e8de"></div>
<div class="c" style="left:589.0px;top:577.30px;width:24.0px;height:19px;background:#f9e8de"></div>
<div class="c" style="left:615.0px;top:577.30px;width:22.0px;height:19px;background:#f9e8de"></div>
<div class="c" style="left:639.0px;top:577.30px;width:30.0px;height:19px;background:#f9e8de"></div>
<div class="c" style="left:671.0px;top:577.30px;width:28.0px;height:19px;background:#f9e8de"></div>
<div class="c" style="left:701.0px;top:577.30px;width:29.0px;height:19px;background:#f9e8de"></div>
<div class="c" style="left:732.0px;top:577.30px;width:15.0px;height:19px;background:#f9e8de"></div>
<div class="c" style="left:749.0px;top:577.30px;width:18.0px;height:19px;background:#f9e8de"></div>
<div class="c" style="left:769.0px;top:577.30px;width:31.0px;height:19px;background:#f9e8de"></div>
<div class="c" style="left:802.0px;top:577.30px;width:29.0px;height:19px;background:#f9e8de"></div>
<div class="c" style="left:833.0px;top:577.30px;width:44.0px;height:19px;background:#f6ece6"></div>
<div class="c" style="left:879.0px;top:577.30px;width:44.0px;height:19px;background:#f0c8a5"></div>
<div class="a" style="left:279.8px;top:578.00px;font-size:12px;line-height:19px;color:#333">cn*CHINA</div>
<div class="n" style="left:408.0px;width:28.4px;top:578.00px;font-weight:400;color:#333">3</div>
<div class="n" style="left:440.0px;width:23.4px;top:578.00px;font-weight:400;color:#333">-</div>
<div class="n" style="left:467.0px;width:29.4px;top:578.00px;font-weight:400;color:#333">-</div>
<div class="n" style="left:500.0px;width:19.4px;top:578.00px;font-weight:400;color:#333">-</div>
<div class="n" style="left:523.0px;width:20.4px;top:578.00px;font-weight:400;color:#333">-</div>
<div class="n" style="left:547.0px;width:15.4px;top:578.00px;font-weight:400;color:#333">-</div>
<div class="n" style="left:566.0px;width:19.4px;top:578.00px;font-weight:400;color:#333">-</div>
<div class="n" style="left:589.0px;width:22.4px;top:578.00px;font-weight:400;color:#333">-</div>
<div class="n" style="left:615.0px;width:20.4px;top:578.00px;font-weight:400;color:#333">-</div>
<div class="n" style="left:639.0px;width:28.4px;top:578.00px;font-weight:400;color:#333">-</div>
<div class="n" style="left:671.0px;width:26.4px;top:578.00px;font-weight:400;color:#333">-</div>
<div class="n" style="left:701.0px;width:27.4px;top:578.00px;font-weight:400;color:#333">-</div>
<div class="n" style="left:732.0px;width:13.4px;top:578.00px;font-weight:400;color:#333">-</div>
<div class="n" style="left:749.0px;width:16.4px;top:578.00px;font-weight:400;color:#333">-</div>
<div class="n" style="left:769.0px;width:29.4px;top:578.00px;font-weight:400;color:#333">-</div>
<div class="n" style="left:802.0px;width:27.4px;top:578.00px;font-weight:400;color:#333">-</div>
<div class="n" style="left:833.0px;width:42.4px;top:578.00px;font-weight:400;color:#3a3a3a">0.0%</div>
<div class="n" style="left:879.0px;width:42.4px;top:578.00px;font-weight:700;color:#222">3</div>
<svg class="c" style="left:927px;top:579.40px" width="19" height="15" viewBox="0 0 19 15">
<rect x="0.6" y="5.4" width="5" height="4.4" fill="#3434c6"/><path d="M4.6 2.6 L10.2 7.6 L4.6 12.5 Z" fill="#3434c6"/>
<rect x="8.8" y="1.9" width="3" height="11.9" fill="#f2a640"/><rect x="11.4" y="0.2" width="3.2" height="13.6" fill="#e5841c"/><rect x="14.4" y="6.2" width="3.6" height="7.6" fill="#f6a83a"/>
</svg>
<div class="c" style="left:278.0px;top:598.25px;width:128.0px;height:19px;background:#f9e8de"></div>
<div class="c" style="left:408.0px;top:598.25px;width:30.0px;height:19px;background:#f9e8de"></div>
<div class="c" style="left:440.0px;top:598.25px;width:25.0px;height:19px;background:#f9e8de"></div>
<div class="c" style="left:467.0px;top:598.25px;width:31.0px;height:19px;background:#f9e8de"></div>
<div class="c" style="left:500.0px;top:598.25px;width:21.0px;height:19px;background:#f9e8de"></div>
<div class="c" style="left:523.0px;top:598.25px;width:22.0px;height:19px;background:#f9e8de"></div>
<div class="c" style="left:547.0px;top:598.25px;width:17.0px;height:19px;background:#f9e8de"></div>
<div class="c" style="left:566.0px;top:598.25px;width:21.0px;height:19px;background:#f9e8de"></div>
<div class="c" style="left:589.0px;top:598.25px;width:24.0px;height:19px;background:#f9e8de"></div>
<div class="c" style="left:615.0px;top:598.25px;width:22.0px;height:19px;background:#f9e8de"></div>
<div class="c" style="left:639.0px;top:598.25px;width:30.0px;height:19px;background:#f9e8de"></div>
<div class="c" style="left:671.0px;top:598.25px;width:28.0px;height:19px;background:#f9e8de"></div>
<div class="c" style="left:701.0px;top:598.25px;width:29.0px;height:19px;background:#f9e8de"></div>
<div class="c" style="left:732.0px;top:598.25px;width:15.0px;height:19px;background:#f9e8de"></div>
<div class="c" style="left:749.0px;top:598.25px;width:18.0px;height:19px;background:#f9e8de"></div>
<div class="c" style="left:769.0px;top:598.25px;width:31.0px;height:19px;background:#f9e8de"></div>
<div class="c" style="left:802.0px;top:598.25px;width:29.0px;height:19px;background:#f9e8de"></div>
<div class="c" style="left:833.0px;top:598.25px;width:44.0px;height:19px;background:#f6ece6"></div>
<div class="c" style="left:879.0px;top:598.25px;width:44.0px;height:19px;background:#f0c8a5"></div>
<div class="a" style="left:279.8px;top:598.95px;font-size:12px;line-height:19px;color:#333">la*LAOS</div>
<div class="n" style="left:408.0px;width:28.4px;top:598.95px;font-weight:400;color:#333">1</div>
<div class="n" style="left:440.0px;width:23.4px;top:598.95px;font-weight:400;color:#333">1</div>
<div class="n" style="left:467.0px;width:29.4px;top:598.95px;font-weight:400;color:#333">-</div>
<div class="n" style="left:500.0px;width:19.4px;top:598.95px;font-weight:400;color:#333">-</div>
<div class="n" style="left:523.0px;width:20.4px;top:598.95px;font-weight:400;color:#333">-</div>
<div class="n" style="left:547.0px;width:15.4px;top:598.95px;font-weight:400;color:#333">-</div>
<div class="n" style="left:566.0px;width:19.4px;top:598.95px;font-weight:400;color:#333">-</div>
<div class="n" style="left:589.0px;width:22.4px;top:598.95px;font-weight:400;color:#333">-</div>
<div class="n" style="left:615.0px;width:20.4px;top:598.95px;font-weight:400;color:#333">-</div>
<div class="n" style="left:639.0px;width:28.4px;top:598.95px;font-weight:400;color:#333">-</div>
<div class="n" style="left:671.0px;width:26.4px;top:598.95px;font-weight:400;color:#333">-</div>
<div class="n" style="left:701.0px;width:27.4px;top:598.95px;font-weight:400;color:#333">-</div>
<div class="n" style="left:732.0px;width:13.4px;top:598.95px;font-weight:400;color:#333">-</div>
<div class="n" style="left:749.0px;width:16.4px;top:598.95px;font-weight:400;color:#333">-</div>
<div class="n" style="left:769.0px;width:29.4px;top:598.95px;font-weight:400;color:#333">-</div>
<div class="n" style="left:802.0px;width:27.4px;top:598.95px;font-weight:400;color:#333">-</div>
<div class="n" style="left:833.0px;width:42.4px;top:598.95px;font-weight:400;color:#3a3a3a">0.0%</div>
<div class="n" style="left:879.0px;width:42.4px;top:598.95px;font-weight:700;color:#222">2</div>
<svg class="c" style="left:927px;top:600.35px" width="19" height="15" viewBox="0 0 19 15">
<rect x="0.6" y="5.4" width="5" height="4.4" fill="#3434c6"/><path d="M4.6 2.6 L10.2 7.6 L4.6 12.5 Z" fill="#3434c6"/>
<rect x="8.8" y="1.9" width="3" height="11.9" fill="#f2a640"/><rect x="11.4" y="0.2" width="3.2" height="13.6" fill="#e5841c"/><rect x="14.4" y="6.2" width="3.6" height="7.6" fill="#f6a83a"/>
</svg>
<div class="c" style="left:278.0px;top:619.20px;width:128.0px;height:19px;background:#f9e8de"></div>
<div class="c" style="left:408.0px;top:619.20px;width:30.0px;height:19px;background:#f9e8de"></div>
<div class="c" style="left:440.0px;top:619.20px;width:25.0px;height:19px;background:#f9e8de"></div>
<div class="c" style="left:467.0px;top:619.20px;width:31.0px;height:19px;background:#f9e8de"></div>
<div class="c" style="left:500.0px;top:619.20px;width:21.0px;height:19px;background:#f9e8de"></div>
<div class="c" style="left:523.0px;top:619.20px;width:22.0px;height:19px;background:#f9e8de"></div>
<div class="c" style="left:547.0px;top:619.20px;width:17.0px;height:19px;background:#f9e8de"></div>
<div class="c" style="left:566.0px;top:619.20px;width:21.0px;height:19px;background:#f9e8de"></div>
<div class="c" style="left:589.0px;top:619.20px;width:24.0px;height:19px;background:#f9e8de"></div>
<div class="c" style="left:615.0px;top:619.20px;width:22.0px;height:19px;background:#f9e8de"></div>
<div class="c" style="left:639.0px;top:619.20px;width:30.0px;height:19px;background:#f9e8de"></div>
<div class="c" style="left:671.0px;top:619.20px;width:28.0px;height:19px;background:#f9e8de"></div>
<div class="c" style="left:701.0px;top:619.20px;width:29.0px;height:19px;background:#f9e8de"></div>
<div class="c" style="left:732.0px;top:619.20px;width:15.0px;height:19px;background:#f9e8de"></div>
<div class="c" style="left:749.0px;top:619.20px;width:18.0px;height:19px;background:#f9e8de"></div>
<div class="c" style="left:769.0px;top:619.20px;width:31.0px;height:19px;background:#f9e8de"></div>
<div class="c" style="left:802.0px;top:619.20px;width:29.0px;height:19px;background:#f9e8de"></div>
<div class="c" style="left:833.0px;top:619.20px;width:44.0px;height:19px;background:#f6ece6"></div>
<div class="c" style="left:879.0px;top:619.20px;width:44.0px;height:19px;background:#f0c8a5"></div>
<div class="a" style="left:279.8px;top:619.90px;font-size:12px;line-height:19px;color:#333">jp*JAPON</div>
<div class="n" style="left:408.0px;width:28.4px;top:619.90px;font-weight:400;color:#333">1</div>
<div class="n" style="left:440.0px;width:23.4px;top:619.90px;font-weight:400;color:#333">-</div>
<div class="n" style="left:467.0px;width:29.4px;top:619.90px;font-weight:400;color:#333">1</div>
<div class="n" style="left:500.0px;width:19.4px;top:619.90px;font-weight:400;color:#333">-</div>
<div class="n" style="left:523.0px;width:20.4px;top:619.90px;font-weight:400;color:#333">-</div>
<div class="n" style="left:547.0px;width:15.4px;top:619.90px;font-weight:400;color:#333">-</div>
<div class="n" style="left:566.0px;width:19.4px;top:619.90px;font-weight:400;color:#333">-</div>
<div class="n" style="left:589.0px;width:22.4px;top:619.90px;font-weight:400;color:#333">-</div>
<div class="n" style="left:615.0px;width:20.4px;top:619.90px;font-weight:400;color:#333">-</div>
<div class="n" style="left:639.0px;width:28.4px;top:619.90px;font-weight:400;color:#333">-</div>
<div class="n" style="left:671.0px;width:26.4px;top:619.90px;font-weight:400;color:#333">-</div>
<div class="n" style="left:701.0px;width:27.4px;top:619.90px;font-weight:400;color:#333">-</div>
<div class="n" style="left:732.0px;width:13.4px;top:619.90px;font-weight:400;color:#333">-</div>
<div class="n" style="left:749.0px;width:16.4px;top:619.90px;font-weight:400;color:#333">-</div>
<div class="n" style="left:769.0px;width:29.4px;top:619.90px;font-weight:400;color:#333">-</div>
<div class="n" style="left:802.0px;width:27.4px;top:619.90px;font-weight:400;color:#333">-</div>
<div class="n" style="left:833.0px;width:42.4px;top:619.90px;font-weight:400;color:#3a3a3a">0.0%</div>
<div class="n" style="left:879.0px;width:42.4px;top:619.90px;font-weight:700;color:#222">2</div>
<svg class="c" style="left:927px;top:621.30px" width="19" height="15" viewBox="0 0 19 15">
<rect x="0.6" y="5.4" width="5" height="4.4" fill="#3434c6"/><path d="M4.6 2.6 L10.2 7.6 L4.6 12.5 Z" fill="#3434c6"/>
<rect x="8.8" y="1.9" width="3" height="11.9" fill="#f2a640"/><rect x="11.4" y="0.2" width="3.2" height="13.6" fill="#e5841c"/><rect x="14.4" y="6.2" width="3.6" height="7.6" fill="#f6a83a"/>
</svg>
<div class="c" style="left:278.0px;top:640.15px;width:128.0px;height:19px;background:#f9e8de"></div>
<div class="c" style="left:408.0px;top:640.15px;width:30.0px;height:19px;background:#f9e8de"></div>
<div class="c" style="left:440.0px;top:640.15px;width:25.0px;height:19px;background:#f9e8de"></div>
<div class="c" style="left:467.0px;top:640.15px;width:31.0px;height:19px;background:#f9e8de"></div>
<div class="c" style="left:500.0px;top:640.15px;width:21.0px;height:19px;background:#f9e8de"></div>
<div class="c" style="left:523.0px;top:640.15px;width:22.0px;height:19px;background:#f9e8de"></div>
<div class="c" style="left:547.0px;top:640.15px;width:17.0px;height:19px;background:#f9e8de"></div>
<div class="c" style="left:566.0px;top:640.15px;width:21.0px;height:19px;background:#f9e8de"></div>
<div class="c" style="left:589.0px;top:640.15px;width:24.0px;height:19px;background:#f9e8de"></div>
<div class="c" style="left:615.0px;top:640.15px;width:22.0px;height:19px;background:#f9e8de"></div>
<div class="c" style="left:639.0px;top:640.15px;width:30.0px;height:19px;background:#f9e8de"></div>
<div class="c" style="left:671.0px;top:640.15px;width:28.0px;height:19px;background:#f9e8de"></div>
<div class="c" style="left:701.0px;top:640.15px;width:29.0px;height:19px;background:#f9e8de"></div>
<div class="c" style="left:732.0px;top:640.15px;width:15.0px;height:19px;background:#f9e8de"></div>
<div class="c" style="left:749.0px;top:640.15px;width:18.0px;height:19px;background:#f9e8de"></div>
<div class="c" style="left:769.0px;top:640.15px;width:31.0px;height:19px;background:#f9e8de"></div>
<div class="c" style="left:802.0px;top:640.15px;width:29.0px;height:19px;background:#f9e8de"></div>
<div class="c" style="left:833.0px;top:640.15px;width:44.0px;height:19px;background:#f6ece6"></div>
<div class="c" style="left:879.0px;top:640.15px;width:44.0px;height:19px;background:#f0c8a5"></div>
<div class="a" style="left:279.8px;top:640.85px;font-size:12px;line-height:19px;color:#333">ec*ECUADOR</div>
<div class="n" style="left:408.0px;width:28.4px;top:640.85px;font-weight:400;color:#333">1</div>
<div class="n" style="left:440.0px;width:23.4px;top:640.85px;font-weight:400;color:#333">-</div>
<div class="n" style="left:467.0px;width:29.4px;top:640.85px;font-weight:400;color:#333">-</div>
<div class="n" style="left:500.0px;width:19.4px;top:640.85px;font-weight:400;color:#333">-</div>
<div class="n" style="left:523.0px;width:20.4px;top:640.85px;font-weight:400;color:#333">-</div>
<div class="n" style="left:547.0px;width:15.4px;top:640.85px;font-weight:400;color:#333">-</div>
<div class="n" style="left:566.0px;width:19.4px;top:640.85px;font-weight:400;color:#333">-</div>
<div class="n" style="left:589.0px;width:22.4px;top:640.85px;font-weight:400;color:#333">-</div>
<div class="n" style="left:615.0px;width:20.4px;top:640.85px;font-weight:400;color:#333">-</div>
<div class="n" style="left:639.0px;width:28.4px;top:640.85px;font-weight:400;color:#333">-</div>
<div class="n" style="left:671.0px;width:26.4px;top:640.85px;font-weight:400;color:#333">-</div>
<div class="n" style="left:701.0px;width:27.4px;top:640.85px;font-weight:400;color:#333">-</div>
<div class="n" style="left:732.0px;width:13.4px;top:640.85px;font-weight:400;color:#333">-</div>
<div class="n" style="left:749.0px;width:16.4px;top:640.85px;font-weight:400;color:#333">-</div>
<div class="n" style="left:769.0px;width:29.4px;top:640.85px;font-weight:400;color:#333">1</div>
<div class="n" style="left:802.0px;width:27.4px;top:640.85px;font-weight:400;color:#333">-</div>
<div class="n" style="left:833.0px;width:42.4px;top:640.85px;font-weight:400;color:#3a3a3a">0.0%</div>
<div class="n" style="left:879.0px;width:42.4px;top:640.85px;font-weight:700;color:#222">2</div>
<svg class="c" style="left:927px;top:642.25px" width="19" height="15" viewBox="0 0 19 15">
<rect x="0.6" y="5.4" width="5" height="4.4" fill="#3434c6"/><path d="M4.6 2.6 L10.2 7.6 L4.6 12.5 Z" fill="#3434c6"/>
<rect x="8.8" y="1.9" width="3" height="11.9" fill="#f2a640"/><rect x="11.4" y="0.2" width="3.2" height="13.6" fill="#e5841c"/><rect x="14.4" y="6.2" width="3.6" height="7.6" fill="#f6a83a"/>
</svg>
<div class="c" style="left:278.0px;top:661.10px;width:128.0px;height:19px;background:#f9e8de"></div>
<div class="c" style="left:408.0px;top:661.10px;width:30.0px;height:19px;background:#f9e8de"></div>
<div class="c" style="left:440.0px;top:661.10px;width:25.0px;height:19px;background:#f9e8de"></div>
<div class="c" style="left:467.0px;top:661.10px;width:31.0px;height:19px;background:#f9e8de"></div>
<div class="c" style="left:500.0px;top:661.10px;width:21.0px;height:19px;background:#f9e8de"></div>
<div class="c" style="left:523.0px;top:661.10px;width:22.0px;height:19px;background:#f9e8de"></div>
<div class="c" style="left:547.0px;top:661.10px;width:17.0px;height:19px;background:#f9e8de"></div>
<div class="c" style="left:566.0px;top:661.10px;width:21.0px;height:19px;background:#f9e8de"></div>
<div class="c" style="left:589.0px;top:661.10px;width:24.0px;height:19px;background:#f9e8de"></div>
<div class="c" style="left:615.0px;top:661.10px;width:22.0px;height:19px;background:#f9e8de"></div>
<div class="c" style="left:639.0px;top:661.10px;width:30.0px;height:19px;background:#f9e8de"></div>
<div class="c" style="left:671.0px;top:661.10px;width:28.0px;height:19px;background:#f9e8de"></div>
<div class="c" style="left:701.0px;top:661.10px;width:29.0px;height:19px;background:#f9e8de"></div>
<div class="c" style="left:732.0px;top:661.10px;width:15.0px;height:19px;background:#f9e8de"></div>
<div class="c" style="left:749.0px;top:661.10px;width:18.0px;height:19px;background:#f9e8de"></div>
<div class="c" style="left:769.0px;top:661.10px;width:31.0px;height:19px;background:#f9e8de"></div>
<div class="c" style="left:802.0px;top:661.10px;width:29.0px;height:19px;background:#f9e8de"></div>
<div class="c" style="left:833.0px;top:661.10px;width:44.0px;height:19px;background:#f6ece6"></div>
<div class="c" style="left:879.0px;top:661.10px;width:44.0px;height:19px;background:#f0c8a5"></div>
<div class="a" style="left:279.8px;top:661.80px;font-size:12px;line-height:19px;color:#333">ro*RUMANIA</div>
<div class="n" style="left:408.0px;width:28.4px;top:661.80px;font-weight:400;color:#333">-</div>
<div class="n" style="left:440.0px;width:23.4px;top:661.80px;font-weight:400;color:#333">-</div>
<div class="n" style="left:467.0px;width:29.4px;top:661.80px;font-weight:400;color:#333">-</div>
<div class="n" style="left:500.0px;width:19.4px;top:661.80px;font-weight:400;color:#333">-</div>
<div class="n" style="left:523.0px;width:20.4px;top:661.80px;font-weight:400;color:#333">-</div>
<div class="n" style="left:547.0px;width:15.4px;top:661.80px;font-weight:400;color:#333">-</div>
<div class="n" style="left:566.0px;width:19.4px;top:661.80px;font-weight:400;color:#333">-</div>
<div class="n" style="left:589.0px;width:22.4px;top:661.80px;font-weight:400;color:#333">-</div>
<div class="n" style="left:615.0px;width:20.4px;top:661.80px;font-weight:400;color:#333">-</div>
<div class="n" style="left:639.0px;width:28.4px;top:661.80px;font-weight:400;color:#333">-</div>
<div class="n" style="left:671.0px;width:26.4px;top:661.80px;font-weight:400;color:#333">-</div>
<div class="n" style="left:701.0px;width:27.4px;top:661.80px;font-weight:400;color:#333">-</div>
<div class="n" style="left:732.0px;width:13.4px;top:661.80px;font-weight:400;color:#333">-</div>
<div class="n" style="left:749.0px;width:16.4px;top:661.80px;font-weight:400;color:#333">-</div>
<div class="n" style="left:769.0px;width:29.4px;top:661.80px;font-weight:400;color:#333">1</div>
<div class="n" style="left:802.0px;width:27.4px;top:661.80px;font-weight:400;color:#333">-</div>
<div class="n" style="left:833.0px;width:42.4px;top:661.80px;font-weight:400;color:#3a3a3a">0.0%</div>
<div class="n" style="left:879.0px;width:42.4px;top:661.80px;font-weight:700;color:#222">1</div>
<svg class="c" style="left:927px;top:663.20px" width="19" height="15" viewBox="0 0 19 15">
<rect x="0.6" y="5.4" width="5" height="4.4" fill="#3434c6"/><path d="M4.6 2.6 L10.2 7.6 L4.6 12.5 Z" fill="#3434c6"/>
<rect x="8.8" y="1.9" width="3" height="11.9" fill="#f2a640"/><rect x="11.4" y="0.2" width="3.2" height="13.6" fill="#e5841c"/><rect x="14.4" y="6.2" width="3.6" height="7.6" fill="#f6a83a"/>
</svg>
<div class="c" style="left:278.0px;top:682.05px;width:128.0px;height:19px;background:#f9e8de"></div>
<div class="c" style="left:408.0px;top:682.05px;width:30.0px;height:19px;background:#f9e8de"></div>
<div class="c" style="left:440.0px;top:682.05px;width:25.0px;height:19px;background:#f9e8de"></div>
<div class="c" style="left:467.0px;top:682.05px;width:31.0px;height:19px;background:#f9e8de"></div>
<div class="c" style="left:500.0px;top:682.05px;width:21.0px;height:19px;background:#f9e8de"></div>
<div class="c" style="left:523.0px;top:682.05px;width:22.0px;height:19px;background:#f9e8de"></div>
<div class="c" style="left:547.0px;top:682.05px;width:17.0px;height:19px;background:#f9e8de"></div>
<div class="c" style="left:566.0px;top:682.05px;width:21.0px;height:19px;background:#f9e8de"></div>
<div class="c" style="left:589.0px;top:682.05px;width:24.0px;height:19px;background:#f9e8de"></div>
<div class="c" style="left:615.0px;top:682.05px;width:22.0px;height:19px;background:#f9e8de"></div>
<div class="c" style="left:639.0px;top:682.05px;width:30.0px;height:19px;background:#f9e8de"></div>
<div class="c" style="left:671.0px;top:682.05px;width:28.0px;height:19px;background:#f9e8de"></div>
<div class="c" style="left:701.0px;top:682.05px;width:29.0px;height:19px;background:#f9e8de"></div>
<div class="c" style="left:732.0px;top:682.05px;width:15.0px;height:19px;background:#f9e8de"></div>
<div class="c" style="left:749.0px;top:682.05px;width:18.0px;height:19px;background:#f9e8de"></div>
<div class="c" style="left:769.0px;top:682.05px;width:31.0px;height:19px;background:#f9e8de"></div>
<div class="c" style="left:802.0px;top:682.05px;width:29.0px;height:19px;background:#f9e8de"></div>
<div class="c" style="left:833.0px;top:682.05px;width:44.0px;height:19px;background:#f6ece6"></div>
<div class="c" style="left:879.0px;top:682.05px;width:44.0px;height:19px;background:#f0c8a5"></div>
<div class="a" style="left:279.8px;top:682.75px;font-size:12px;line-height:19px;color:#333">ua*UCRANIA</div>
<div class="n" style="left:408.0px;width:28.4px;top:682.75px;font-weight:400;color:#333">-</div>
<div class="n" style="left:440.0px;width:23.4px;top:682.75px;font-weight:400;color:#333">-</div>
<div class="n" style="left:467.0px;width:29.4px;top:682.75px;font-weight:400;color:#333">-</div>
<div class="n" style="left:500.0px;width:19.4px;top:682.75px;font-weight:400;color:#333">-</div>
<div class="n" style="left:523.0px;width:20.4px;top:682.75px;font-weight:400;color:#333">-</div>
<div class="n" style="left:547.0px;width:15.4px;top:682.75px;font-weight:400;color:#333">-</div>
<div class="n" style="left:566.0px;width:19.4px;top:682.75px;font-weight:400;color:#333">-</div>
<div class="n" style="left:589.0px;width:22.4px;top:682.75px;font-weight:400;color:#333">-</div>
<div class="n" style="left:615.0px;width:20.4px;top:682.75px;font-weight:400;color:#333">-</div>
<div class="n" style="left:639.0px;width:28.4px;top:682.75px;font-weight:400;color:#333">-</div>
<div class="n" style="left:671.0px;width:26.4px;top:682.75px;font-weight:400;color:#333">-</div>
<div class="n" style="left:701.0px;width:27.4px;top:682.75px;font-weight:400;color:#333">-</div>
<div class="n" style="left:732.0px;width:13.4px;top:682.75px;font-weight:400;color:#333">-</div>
<div class="n" style="left:749.0px;width:16.4px;top:682.75px;font-weight:400;color:#333">-</div>
<div class="n" style="left:769.0px;width:29.4px;top:682.75px;font-weight:400;color:#333">1</div>
<div class="n" style="left:802.0px;width:27.4px;top:682.75px;font-weight:400;color:#333">-</div>
<div class="n" style="left:833.0px;width:42.4px;top:682.75px;font-weight:400;color:#3a3a3a">0.0%</div>
<div class="n" style="left:879.0px;width:42.4px;top:682.75px;font-weight:700;color:#222">1</div>
<svg class="c" style="left:927px;top:684.15px" width="19" height="15" viewBox="0 0 19 15">
<rect x="0.6" y="5.4" width="5" height="4.4" fill="#3434c6"/><path d="M4.6 2.6 L10.2 7.6 L4.6 12.5 Z" fill="#3434c6"/>
<rect x="8.8" y="1.9" width="3" height="11.9" fill="#f2a640"/><rect x="11.4" y="0.2" width="3.2" height="13.6" fill="#e5841c"/><rect x="14.4" y="6.2" width="3.6" height="7.6" fill="#f6a83a"/>
</svg>
<div class="c" style="left:278.0px;top:703.00px;width:128.0px;height:19px;background:#f9e8de"></div>
<div class="c" style="left:408.0px;top:703.00px;width:30.0px;height:19px;background:#f9e8de"></div>
<div class="c" style="left:440.0px;top:703.00px;width:25.0px;height:19px;background:#f9e8de"></div>
<div class="c" style="left:467.0px;top:703.00px;width:31.0px;height:19px;background:#f9e8de"></div>
<div class="c" style="left:500.0px;top:703.00px;width:21.0px;height:19px;background:#f9e8de"></div>
<div class="c" style="left:523.0px;top:703.00px;width:22.0px;height:19px;background:#f9e8de"></div>
<div class="c" style="left:547.0px;top:703.00px;width:17.0px;height:19px;background:#f9e8de"></div>
<div class="c" style="left:566.0px;top:703.00px;width:21.0px;height:19px;background:#f9e8de"></div>
<div class="c" style="left:589.0px;top:703.00px;width:24.0px;height:19px;background:#f9e8de"></div>
<div class="c" style="left:615.0px;top:703.00px;width:22.0px;height:19px;background:#f9e8de"></div>
<div class="c" style="left:639.0px;top:703.00px;width:30.0px;height:19px;background:#f9e8de"></div>
<div class="c" style="left:671.0px;top:703.00px;width:28.0px;height:19px;background:#f9e8de"></div>
<div class="c" style="left:701.0px;top:703.00px;width:29.0px;height:19px;background:#f9e8de"></div>
<div class="c" style="left:732.0px;top:703.00px;width:15.0px;height:19px;background:#f9e8de"></div>
<div class="c" style="left:749.0px;top:703.00px;width:18.0px;height:19px;background:#f9e8de"></div>
<div class="c" style="left:769.0px;top:703.00px;width:31.0px;height:19px;background:#f9e8de"></div>
<div class="c" style="left:802.0px;top:703.00px;width:29.0px;height:19px;background:#f9e8de"></div>
<div class="c" style="left:833.0px;top:703.00px;width:44.0px;height:19px;background:#f6ece6"></div>
<div class="c" style="left:879.0px;top:703.00px;width:44.0px;height:19px;background:#f0c8a5"></div>
<div class="a" style="left:279.8px;top:703.70px;font-size:12px;line-height:19px;color:#333">us*ESTADOS UNIDOS</div>
<div class="n" style="left:408.0px;width:28.4px;top:703.70px;font-weight:400;color:#333">-</div>
<div class="n" style="left:440.0px;width:23.4px;top:703.70px;font-weight:400;color:#333">-</div>
<div class="n" style="left:467.0px;width:29.4px;top:703.70px;font-weight:400;color:#333">-</div>
<div class="n" style="left:500.0px;width:19.4px;top:703.70px;font-weight:400;color:#333">-</div>
<div class="n" style="left:523.0px;width:20.4px;top:703.70px;font-weight:400;color:#333">-</div>
<div class="n" style="left:547.0px;width:15.4px;top:703.70px;font-weight:400;color:#333">-</div>
<div class="n" style="left:566.0px;width:19.4px;top:703.70px;font-weight:400;color:#333">-</div>
<div class="n" style="left:589.0px;width:22.4px;top:703.70px;font-weight:400;color:#333">-</div>
<div class="n" style="left:615.0px;width:20.4px;top:703.70px;font-weight:400;color:#333">-</div>
<div class="n" style="left:639.0px;width:28.4px;top:703.70px;font-weight:400;color:#333">-</div>
<div class="n" style="left:671.0px;width:26.4px;top:703.70px;font-weight:400;color:#333">-</div>
<div class="n" style="left:701.0px;width:27.4px;top:703.70px;font-weight:400;color:#333">-</div>
<div class="n" style="left:732.0px;width:13.4px;top:703.70px;font-weight:400;color:#333">-</div>
<div class="n" style="left:749.0px;width:16.4px;top:703.70px;font-weight:400;color:#333">-</div>
<div class="n" style="left:769.0px;width:29.4px;top:703.70px;font-weight:400;color:#333">1</div>
<div class="n" style="left:802.0px;width:27.4px;top:703.70px;font-weight:400;color:#333">-</div>
<div class="n" style="left:833.0px;width:42.4px;top:703.70px;font-weight:400;color:#3a3a3a">0.0%</div>
<div class="n" style="left:879.0px;width:42.4px;top:703.70px;font-weight:700;color:#222">1</div>
<svg class="c" style="left:927px;top:705.10px" width="19" height="15" viewBox="0 0 19 15">
<rect x="0.6" y="5.4" width="5" height="4.4" fill="#3434c6"/><path d="M4.6 2.6 L10.2 7.6 L4.6 12.5 Z" fill="#3434c6"/>
<rect x="8.8" y="1.9" width="3" height="11.9" fill="#f2a640"/><rect x="11.4" y="0.2" width="3.2" height="13.6" fill="#e5841c"/><rect x="14.4" y="6.2" width="3.6" height="7.6" fill="#f6a83a"/>
</svg>
<div class="c" style="left:278.0px;top:723.95px;width:128.0px;height:19px;background:#f9e8de"></div>
<div class="c" style="left:408.0px;top:723.95px;width:30.0px;height:19px;background:#f9e8de"></div>
<div class="c" style="left:440.0px;top:723.95px;width:25.0px;height:19px;background:#f9e8de"></div>
<div class="c" style="left:467.0px;top:723.95px;width:31.0px;height:19px;background:#f9e8de"></div>
<div class="c" style="left:500.0px;top:723.95px;width:21.0px;height:19px;background:#f9e8de"></div>
<div class="c" style="left:523.0px;top:723.95px;width:22.0px;height:19px;background:#f9e8de"></div>
<div class="c" style="left:547.0px;top:723.95px;width:17.0px;height:19px;background:#f9e8de"></div>
<div class="c" style="left:566.0px;top:723.95px;width:21.0px;height:19px;background:#f9e8de"></div>
<div class="c" style="left:589.0px;top:723.95px;width:24.0px;height:19px;background:#f9e8de"></div>
<div class="c" style="left:615.0px;top:723.95px;width:22.0px;height:19px;background:#f9e8de"></div>
<div class="c" style="left:639.0px;top:723.95px;width:30.0px;height:19px;background:#f9e8de"></div>
<div class="c" style="left:671.0px;top:723.95px;width:28.0px;height:19px;background:#f9e8de"></div>
<div class="c" style="left:701.0px;top:723.95px;width:29.0px;height:19px;background:#f9e8de"></div>
<div class="c" style="left:732.0px;top:723.95px;width:15.0px;height:19px;background:#f9e8de"></div>
<div class="c" style="left:749.0px;top:723.95px;width:18.0px;height:19px;background:#f9e8de"></div>
<div class="c" style="left:769.0px;top:723.95px;width:31.0px;height:19px;background:#f9e8de"></div>
<div class="c" style="left:802.0px;top:723.95px;width:29.0px;height:19px;background:#f9e8de"></div>
<div class="c" style="left:833.0px;top:723.95px;width:44.0px;height:19px;background:#f6ece6"></div>
<div class="c" style="left:879.0px;top:723.95px;width:44.0px;height:19px;background:#f0c8a5"></div>
<div class="a" style="left:279.8px;top:724.65px;font-size:12px;line-height:19px;color:#333">id*INDONESIA</div>
<div class="n" style="left:408.0px;width:28.4px;top:724.65px;font-weight:400;color:#333">1</div>
<div class="n" style="left:440.0px;width:23.4px;top:724.65px;font-weight:400;color:#333">-</div>
<div class="n" style="left:467.0px;width:29.4px;top:724.65px;font-weight:400;color:#333">-</div>
<div class="n" style="left:500.0px;width:19.4px;top:724.65px;font-weight:400;color:#333">-</div>
<div class="n" style="left:523.0px;width:20.4px;top:724.65px;font-weight:400;color:#333">-</div>
<div class="n" style="left:547.0px;width:15.4px;top:724.65px;font-weight:400;color:#333">-</div>
<div class="n" style="left:566.0px;width:19.4px;top:724.65px;font-weight:400;color:#333">-</div>
<div class="n" style="left:589.0px;width:22.4px;top:724.65px;font-weight:400;color:#333">-</div>
<div class="n" style="left:615.0px;width:20.4px;top:724.65px;font-weight:400;color:#333">-</div>
<div class="n" style="left:639.0px;width:28.4px;top:724.65px;font-weight:400;color:#333">-</div>
<div class="n" style="left:671.0px;width:26.4px;top:724.65px;font-weight:400;color:#333">-</div>
<div class="n" style="left:701.0px;width:27.4px;top:724.65px;font-weight:400;color:#333">-</div>
<div class="n" style="left:732.0px;width:13.4px;top:724.65px;font-weight:400;color:#333">-</div>
<div class="n" style="left:749.0px;width:16.4px;top:724.65px;font-weight:400;color:#333">-</div>
<div class="n" style="left:769.0px;width:29.4px;top:724.65px;font-weight:400;color:#333">-</div>
<div class="n" style="left:802.0px;width:27.4px;top:724.65px;font-weight:400;color:#333">-</div>
<div class="n" style="left:833.0px;width:42.4px;top:724.65px;font-weight:400;color:#3a3a3a">0.0%</div>
<div class="n" style="left:879.0px;width:42.4px;top:724.65px;font-weight:700;color:#222">1</div>
<svg class="c" style="left:927px;top:726.05px" width="19" height="15" viewBox="0 0 19 15">
<rect x="0.6" y="5.4" width="5" height="4.4" fill="#3434c6"/><path d="M4.6 2.6 L10.2 7.6 L4.6 12.5 Z" fill="#3434c6"/>
<rect x="8.8" y="1.9" width="3" height="11.9" fill="#f2a640"/><rect x="11.4" y="0.2" width="3.2" height="13.6" fill="#e5841c"/><rect x="14.4" y="6.2" width="3.6" height="7.6" fill="#f6a83a"/>
</svg>
<div class="c" style="left:278.0px;top:744.90px;width:128.0px;height:19px;background:#f9e8de"></div>
<div class="c" style="left:408.0px;top:744.90px;width:30.0px;height:19px;background:#f9e8de"></div>
<div class="c" style="left:440.0px;top:744.90px;width:25.0px;height:19px;background:#f9e8de"></div>
<div class="c" style="left:467.0px;top:744.90px;width:31.0px;height:19px;background:#f9e8de"></div>
<div class="c" style="left:500.0px;top:744.90px;width:21.0px;height:19px;background:#f9e8de"></div>
<div class="c" style="left:523.0px;top:744.90px;width:22.0px;height:19px;background:#f9e8de"></div>
<div class="c" style="left:547.0px;top:744.90px;width:17.0px;height:19px;background:#f9e8de"></div>
<div class="c" style="left:566.0px;top:744.90px;width:21.0px;height:19px;background:#f9e8de"></div>
<div class="c" style="left:589.0px;top:744.90px;width:24.0px;height:19px;background:#f9e8de"></div>
<div class="c" style="left:615.0px;top:744.90px;width:22.0px;height:19px;background:#f9e8de"></div>
<div class="c" style="left:639.0px;top:744.90px;width:30.0px;height:19px;background:#f9e8de"></div>
<div class="c" style="left:671.0px;top:744.90px;width:28.0px;height:19px;background:#f9e8de"></div>
<div class="c" style="left:701.0px;top:744.90px;width:29.0px;height:19px;background:#f9e8de"></div>
<div class="c" style="left:732.0px;top:744.90px;width:15.0px;height:19px;background:#f9e8de"></div>
<div class="c" style="left:749.0px;top:744.90px;width:18.0px;height:19px;background:#f9e8de"></div>
<div class="c" style="left:769.0px;top:744.90px;width:31.0px;height:19px;background:#f9e8de"></div>
<div class="c" style="left:802.0px;top:744.90px;width:29.0px;height:19px;background:#f9e8de"></div>
<div class="c" style="left:833.0px;top:744.90px;width:44.0px;height:19px;background:#f6ece6"></div>
<div class="c" style="left:879.0px;top:744.90px;width:44.0px;height:19px;background:#f0c8a5"></div>
<div class="a" style="left:279.8px;top:745.60px;font-size:12px;line-height:19px;color:#333">pt*PORTUGAL</div>
<div class="n" style="left:408.0px;width:28.4px;top:745.60px;font-weight:400;color:#333">-</div>
<div class="n" style="left:440.0px;width:23.4px;top:745.60px;font-weight:400;color:#333">-</div>
<div class="n" style="left:467.0px;width:29.4px;top:745.60px;font-weight:400;color:#333">-</div>
<div class="n" style="left:500.0px;width:19.4px;top:745.60px;font-weight:400;color:#333">-</div>
<div class="n" style="left:523.0px;width:20.4px;top:745.60px;font-weight:400;color:#333">-</div>
<div class="n" style="left:547.0px;width:15.4px;top:745.60px;font-weight:400;color:#333">-</div>
<div class="n" style="left:566.0px;width:19.4px;top:745.60px;font-weight:400;color:#333">-</div>
<div class="n" style="left:589.0px;width:22.4px;top:745.60px;font-weight:400;color:#333">-</div>
<div class="n" style="left:615.0px;width:20.4px;top:745.60px;font-weight:400;color:#333">-</div>
<div class="n" style="left:639.0px;width:28.4px;top:745.60px;font-weight:400;color:#333">-</div>
<div class="n" style="left:671.0px;width:26.4px;top:745.60px;font-weight:400;color:#333">-</div>
<div class="n" style="left:701.0px;width:27.4px;top:745.60px;font-weight:400;color:#333">-</div>
<div class="n" style="left:732.0px;width:13.4px;top:745.60px;font-weight:400;color:#333">-</div>
<div class="n" style="left:749.0px;width:16.4px;top:745.60px;font-weight:400;color:#333">-</div>
<div class="n" style="left:769.0px;width:29.4px;top:745.60px;font-weight:400;color:#333">1</div>
<div class="n" style="left:802.0px;width:27.4px;top:745.60px;font-weight:400;color:#333">-</div>
<div class="n" style="left:833.0px;width:42.4px;top:745.60px;font-weight:400;color:#3a3a3a">0.0%</div>
<div class="n" style="left:879.0px;width:42.4px;top:745.60px;font-weight:700;color:#222">1</div>
<svg class="c" style="left:927px;top:747.00px" width="19" height="15" viewBox="0 0 19 15">
<rect x="0.6" y="5.4" width="5" height="4.4" fill="#3434c6"/><path d="M4.6 2.6 L10.2 7.6 L4.6 12.5 Z" fill="#3434c6"/>
<rect x="8.8" y="1.9" width="3" height="11.9" fill="#f2a640"/><rect x="11.4" y="0.2" width="3.2" height="13.6" fill="#e5841c"/><rect x="14.4" y="6.2" width="3.6" height="7.6" fill="#f6a83a"/>
</svg>
<div class="c" style="left:278.0px;top:765.85px;width:128.0px;height:19px;background:#f0c8a5"></div>
<div class="c" style="left:408.0px;top:765.85px;width:30.0px;height:19px;background:#f0c8a5"></div>
<div class="c" style="left:440.0px;top:765.85px;width:25.0px;height:19px;background:#f0c8a5"></div>
<div class="c" style="left:467.0px;top:765.85px;width:31.0px;height:19px;background:#f0c8a5"></div>
<div class="c" style="left:500.0px;top:765.85px;width:21.0px;height:19px;background:#f0c8a5"></div>
<div class="c" style="left:523.0px;top:765.85px;width:22.0px;height:19px;background:#f0c8a5"></div>
<div class="c" style="left:547.0px;top:765.85px;width:17.0px;height:19px;background:#f0c8a5"></div>
<div class="c" style="left:566.0px;top:765.85px;width:21.0px;height:19px;background:#f0c8a5"></div>
<div class="c" style="left:589.0px;top:765.85px;width:24.0px;height:19px;background:#f0c8a5"></div>
<div class="c" style="left:615.0px;top:765.85px;width:22.0px;height:19px;background:#f0c8a5"></div>
<div class="c" style="left:639.0px;top:765.85px;width:30.0px;height:19px;background:#f0c8a5"></div>
<div class="c" style="left:671.0px;top:765.85px;width:28.0px;height:19px;background:#f0c8a5"></div>
<div class="c" style="left:701.0px;top:765.85px;width:29.0px;height:19px;background:#f0c8a5"></div>
<div class="c" style="left:732.0px;top:765.85px;width:15.0px;height:19px;background:#f0c8a5"></div>
<div class="c" style="left:749.0px;top:765.85px;width:18.0px;height:19px;background:#f0c8a5"></div>
<div class="c" style="left:769.0px;top:765.85px;width:31.0px;height:19px;background:#f0c8a5"></div>
<div class="c" style="left:802.0px;top:765.85px;width:29.0px;height:19px;background:#f0c8a5"></div>
<div class="c" style="left:833.0px;top:765.85px;width:44.0px;height:19px;background:#f0c8a5"></div>
<div class="c" style="left:879.0px;top:765.85px;width:44.0px;height:19px;background:#f0c8a5"></div>
<div class="n" style="left:277.7px;width:125.2px;top:766.55px;font-weight:700;color:#222">TOTAL</div>
<div class="n" style="left:408.0px;width:28.4px;top:766.55px;font-weight:700;color:#222">5467</div>
<div class="n" style="left:440.0px;width:23.4px;top:766.55px;font-weight:700;color:#222">214</div>
<div class="n" style="left:467.0px;width:29.4px;top:766.55px;font-weight:700;color:#222">1087</div>
<div class="n" style="left:500.0px;width:19.4px;top:766.55px;font-weight:700;color:#222">18</div>
<div class="n" style="left:523.0px;width:20.4px;top:766.55px;font-weight:400;color:#222">-</div>
<div class="n" style="left:547.0px;width:15.4px;top:766.55px;font-weight:700;color:#222">5</div>
<div class="n" style="left:566.0px;width:19.4px;top:766.55px;font-weight:400;color:#222">-</div>
<div class="n" style="left:589.0px;width:22.4px;top:766.55px;font-weight:700;color:#222">171</div>
<div class="n" style="left:615.0px;width:20.4px;top:766.55px;font-weight:700;color:#222">7</div>
<div class="n" style="left:639.0px;width:28.4px;top:766.55px;font-weight:700;color:#222">3</div>
<div class="n" style="left:671.0px;width:26.4px;top:766.55px;font-weight:700;color:#222">321</div>
<div class="n" style="left:701.0px;width:27.4px;top:766.55px;font-weight:700;color:#222">3</div>
<div class="n" style="left:732.0px;width:13.4px;top:766.55px;font-weight:400;color:#222">-</div>
<div class="n" style="left:749.0px;width:16.4px;top:766.55px;font-weight:700;color:#222">10</div>
<div class="n" style="left:769.0px;width:29.4px;top:766.55px;font-weight:700;color:#222">2380</div>
<div class="n" style="left:802.0px;width:27.4px;top:766.55px;font-weight:700;color:#222">70</div>
<div class="n" style="left:833.0px;width:42.4px;top:766.55px;font-weight:700;color:#222">100.0%</div>
<div class="n" style="left:879.0px;width:42.4px;top:766.55px;font-weight:700;color:#222">9756</div>
<svg class="c" style="left:927px;top:767.95px" width="19" height="15" viewBox="0 0 19 15">
<rect x="0.6" y="5.4" width="5" height="4.4" fill="#3434c6"/><path d="M4.6 2.6 L10.2 7.6 L4.6 12.5 Z" fill="#3434c6"/>
<rect x="8.8" y="1.9" width="3" height="11.9" fill="#f2a640"/><rect x="11.4" y="0.2" width="3.2" height="13.6" fill="#e5841c"/><rect x="14.4" y="6.2" width="3.6" height="7.6" fill="#f6a83a"/>
</svg>
<svg class="c" style="left:416.10px;top:788.5px" width="14" height="20" viewBox="0 0 14 20">
<rect x="4.3" y="0.5" width="5.4" height="6.5" fill="#3434c6"/><path d="M1.4 6 L12.4 6 L6.9 12.3 Z" fill="#3434c6"/>
<rect x="1" y="9.8" width="4.4" height="9.2" fill="#f2a22e"/><rect x="5.3" y="11" width="3.2" height="8" fill="#e07a18"/><rect x="8.4" y="12.4" width="4.2" height="6.6" fill="#f6a83a"/>
</svg>
<svg class="c" style="left:445.60px;top:788.5px" width="14" height="20" viewBox="0 0 14 20">
<rect x="4.3" y="0.5" width="5.4" height="6.5" fill="#3434c6"/><path d="M1.4 6 L12.4 6 L6.9 12.3 Z" fill="#3434c6"/>
<rect x="1" y="9.8" width="4.4" height="9.2" fill="#f2a22e"/><rect x="5.3" y="11" width="3.2" height="8" fill="#e07a18"/><rect x="8.4" y="12.4" width="4.2" height="6.6" fill="#f6a83a"/>
</svg>
<svg class="c" style="left:475.60px;top:788.5px" width="14" height="20" viewBox="0 0 14 20">
<rect x="4.3" y="0.5" width="5.4" height="6.5" fill="#3434c6"/><path d="M1.4 6 L12.4 6 L6.9 12.3 Z" fill="#3434c6"/>
<rect x="1" y="9.8" width="4.4" height="9.2" fill="#f2a22e"/><rect x="5.3" y="11" width="3.2" height="8" fill="#e07a18"/><rect x="8.4" y="12.4" width="4.2" height="6.6" fill="#f6a83a"/>
</svg>
<svg class="c" style="left:503.60px;top:788.5px" width="14" height="20" viewBox="0 0 14 20">
<rect x="4.3" y="0.5" width="5.4" height="6.5" fill="#3434c6"/><path d="M1.4 6 L12.4 6 L6.9 12.3 Z" fill="#3434c6"/>
<rect x="1" y="9.8" width="4.4" height="9.2" fill="#f2a22e"/><rect x="5.3" y="11" width="3.2" height="8" fill="#e07a18"/><rect x="8.4" y="12.4" width="4.2" height="6.6" fill="#f6a83a"/>
</svg>
<svg class="c" style="left:548.60px;top:788.5px" width="14" height="20" viewBox="0 0 14 20">
<rect x="4.3" y="0.5" width="5.4" height="6.5" fill="#3434c6"/><path d="M1.4 6 L12.4 6 L6.9 12.3 Z" fill="#3434c6"/>
<rect x="1" y="9.8" width="4.4" height="9.2" fill="#f2a22e"/><rect x="5.3" y="11" width="3.2" height="8" fill="#e07a18"/><rect x="8.4" y="12.4" width="4.2" height="6.6" fill="#f6a83a"/>
</svg>
<svg class="c" style="left:594.10px;top:788.5px" width="14" height="20" viewBox="0 0 14 20">
<rect x="4.3" y="0.5" width="5.4" height="6.5" fill="#3434c6"/><path d="M1.4 6 L12.4 6 L6.9 12.3 Z" fill="#3434c6"/>
<rect x="1" y="9.8" width="4.4" height="9.2" fill="#f2a22e"/><rect x="5.3" y="11" width="3.2" height="8" fill="#e07a18"/><rect x="8.4" y="12.4" width="4.2" height="6.6" fill="#f6a83a"/>
</svg>
<svg class="c" style="left:619.10px;top:788.5px" width="14" height="20" viewBox="0 0 14 20">
<rect x="4.3" y="0.5" width="5.4" height="6.5" fill="#3434c6"/><path d="M1.4 6 L12.4 6 L6.9 12.3 Z" fill="#3434c6"/>
<rect x="1" y="9.8" width="4.4" height="9.2" fill="#f2a22e"/><rect x="5.3" y="11" width="3.2" height="8" fill="#e07a18"/><rect x="8.4" y="12.4" width="4.2" height="6.6" fill="#f6a83a"/>
</svg>
<svg class="c" style="left:647.10px;top:788.5px" width="14" height="20" viewBox="0 0 14 20">
<rect x="4.3" y="0.5" width="5.4" height="6.5" fill="#3434c6"/><path d="M1.4 6 L12.4 6 L6.9 12.3 Z" fill="#3434c6"/>
<rect x="1" y="9.8" width="4.4" height="9.2" fill="#f2a22e"/><rect x="5.3" y="11" width="3.2" height="8" fill="#e07a18"/><rect x="8.4" y="12.4" width="4.2" height="6.6" fill="#f6a83a"/>
</svg>
<svg class="c" style="left:678.10px;top:788.5px" width="14" height="20" viewBox="0 0 14 20">
<rect x="4.3" y="0.5" width="5.4" height="6.5" fill="#3434c6"/><path d="M1.4 6 L12.4 6 L6.9 12.3 Z" fill="#3434c6"/>
<rect x="1" y="9.8" width="4.4" height="9.2" fill="#f2a22e"/><rect x="5.3" y="11" width="3.2" height="8" fill="#e07a18"/><rect x="8.4" y="12.4" width="4.2" height="6.6" fill="#f6a83a"/>
</svg>
<svg class="c" style="left:708.60px;top:788.5px" width="14" height="20" viewBox="0 0 14 20">
<rect x="4.3" y="0.5" width="5.4" height="6.5" fill="#3434c6"/><path d="M1.4 6 L12.4 6 L6.9 12.3 Z" fill="#3434c6"/>
<rect x="1" y="9.8" width="4.4" height="9.2" fill="#f2a22e"/><rect x="5.3" y="11" width="3.2" height="8" fill="#e07a18"/><rect x="8.4" y="12.4" width="4.2" height="6.6" fill="#f6a83a"/>
</svg>
<svg class="c" style="left:751.10px;top:788.5px" width="14" height="20" viewBox="0 0 14 20">
<rect x="4.3" y="0.5" width="5.4" height="6.5" fill="#3434c6"/><path d="M1.4 6 L12.4 6 L6.9 12.3 Z" fill="#3434c6"/>
<rect x="1" y="9.8" width="4.4" height="9.2" fill="#f2a22e"/><rect x="5.3" y="11" width="3.2" height="8" fill="#e07a18"/><rect x="8.4" y="12.4" width="4.2" height="6.6" fill="#f6a83a"/>
</svg>
<svg class="c" style="left:777.60px;top:788.5px" width="14" height="20" viewBox="0 0 14 20">
<rect x="4.3" y="0.5" width="5.4" height="6.5" fill="#3434c6"/><path d="M1.4 6 L12.4 6 L6.9 12.3 Z" fill="#3434c6"/>
<rect x="1" y="9.8" width="4.4" height="9.2" fill="#f2a22e"/><rect x="5.3" y="11" width="3.2" height="8" fill="#e07a18"/><rect x="8.4" y="12.4" width="4.2" height="6.6" fill="#f6a83a"/>
</svg>
<svg class="c" style="left:809.60px;top:788.5px" width="14" height="20" viewBox="0 0 14 20">
<rect x="4.3" y="0.5" width="5.4" height="6.5" fill="#3434c6"/><path d="M1.4 6 L12.4 6 L6.9 12.3 Z" fill="#3434c6"/>
<rect x="1" y="9.8" width="4.4" height="9.2" fill="#f2a22e"/><rect x="5.3" y="11" width="3.2" height="8" fill="#e07a18"/><rect x="8.4" y="12.4" width="4.2" height="6.6" fill="#f6a83a"/>
</svg>
<svg class="c" style="left:894.10px;top:788.5px" width="14" height="20" viewBox="0 0 14 20">
<rect x="4.3" y="0.5" width="5.4" height="6.5" fill="#3434c6"/><path d="M1.4 6 L12.4 6 L6.9 12.3 Z" fill="#3434c6"/>
<rect x="1" y="9.8" width="4.4" height="9.2" fill="#f2a22e"/><rect x="5.3" y="11" width="3.2" height="8" fill="#e07a18"/><rect x="8.4" y="12.4" width="4.2" height="6.6" fill="#f6a83a"/>
</svg>
<svg class="c" style="left:0;top:0;mix-blend-mode:darken" width="1024" height="817" viewBox="0 0 1024 817">
<path d="M276.5 410.5 L436 410.8 C444 411.2 447 414.2 456 414.6 L520 416.3 L612 416.8 C626 416.6 628 413.7 642 413.7 L1006 413.7 L1006 427.3 L642 426.8 C628 426.9 626 430.4 612 430.4 L520 430.3 L456 428.8 C446 428.5 440 425.8 430 425.8 L276.5 424.7 C273.5 424.7 273.8 422 273.8 417.6 C273.8 413 273.5 410.5 276.5 410.5 Z" fill="#fae400"/>
</svg>
</body></html>
